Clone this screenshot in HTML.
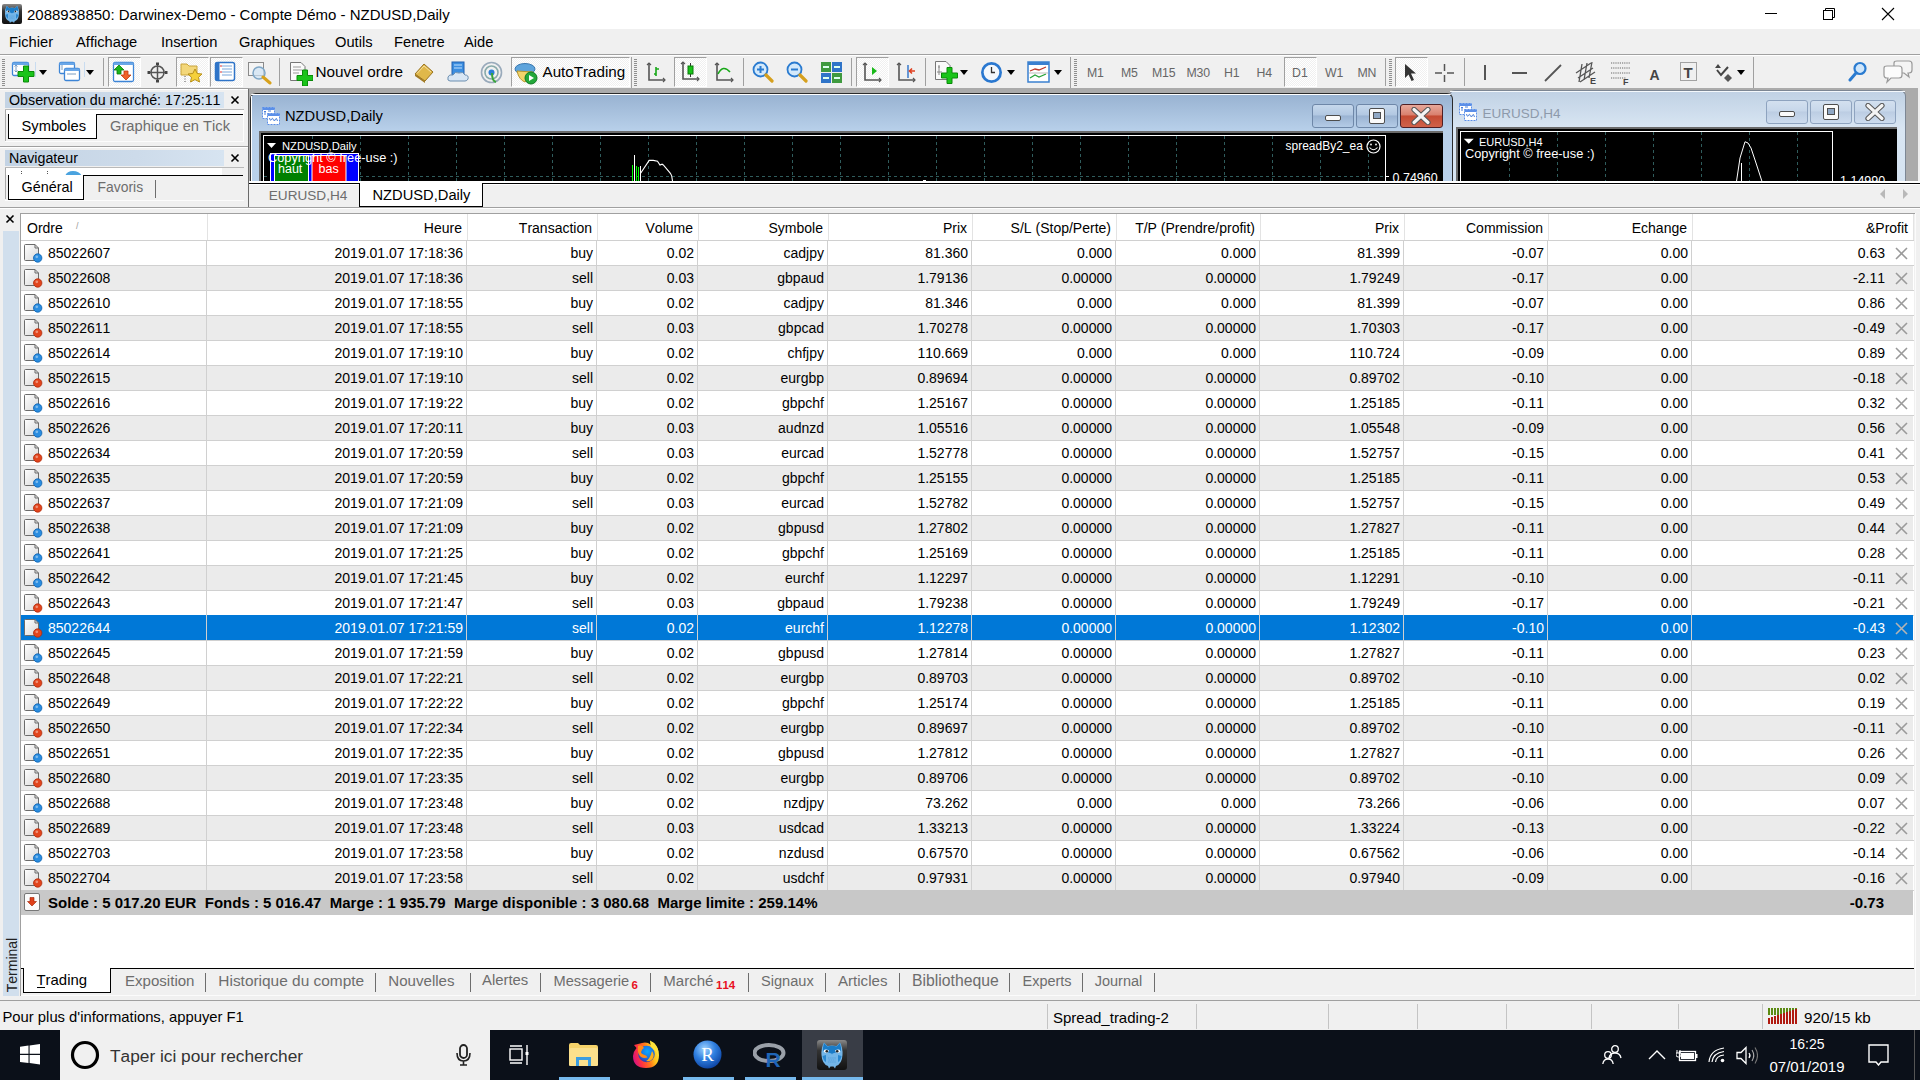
<!DOCTYPE html>
<html><head><meta charset="utf-8"><title>MT4</title>
<style>
html,body{margin:0;padding:0}
body{width:1920px;height:1080px;overflow:hidden;position:relative;font-family:"Liberation Sans",sans-serif;font-size:14px;color:#000;background:#f0f0f0}
.a{position:absolute}
.t{position:absolute;white-space:nowrap;line-height:1;font-variant-ligatures:none;font-kerning:none}
</style></head><body>
<div class="a" style="left:0px;top:0px;width:1920px;height:29px;background:#fff;"></div>
<svg class="a" style="left:2px;top:4px" width="20" height="20" viewBox="0 0 30 30"><defs><linearGradient id="OBG1" x1="0" y1="0" x2="0" y2="1"><stop offset="0" stop-color="#8a8a8a"/><stop offset="0.35" stop-color="#333"/><stop offset="1" stop-color="#111"/></linearGradient></defs>
<rect x="0" y="0" width="30" height="30" rx="3" fill="url(#OBG1)"/>
<path d="M7 2.5L10.5 6Q15 4.8 19.5 6L23 2.5Q26 8 25.5 15Q25 24 19 26L18 28.5L16.5 26.5H13.5L12 28.5L11 26Q5 24 4.5 15Q4 8 7 2.5Z" fill="#74b6e8"/>
<path d="M7 3L10.5 6.5Q15 5 19.5 6.5L23 3Q24.5 8 24 11L15.5 13.5L15 14.5L14.5 13.5L6 11Q5.5 8 7 3Z" fill="#1a7cc8"/>
<path d="M6.5 11Q8 8.5 12 10.5Q11.5 13 9 12.8Q7 12.5 6.5 11Z" fill="#fff"/><path d="M23.5 11Q22 8.5 18 10.5Q18.5 13 21 12.8Q23 12.5 23.5 11Z" fill="#fff"/>
<circle cx="9.8" cy="11.2" r="1.3" fill="#222"/><circle cx="20.2" cy="11.2" r="1.3" fill="#222"/>
<path d="M5.5 16Q6.5 21 9 22V15Z M24.5 16Q23.5 21 21 22V15Z" fill="#2a88d0"/>
<path d="M11 18H19M11.5 20H18.5M11 22H19" stroke="#4a9ad8" stroke-width="0.7" stroke-dasharray="1.5 0.6"/></svg>
<div class="t" style="top:7.30px;font-size:15px;left:27px;">2088938850: Darwinex-Demo - Compte Démo - NZDUSD,Daily</div>
<div class="a" style="left:1765px;top:13px;width:12px;height:1px;background:#000;"></div>
<svg class="a" style="left:1821px;top:6px;" width="16" height="16" viewBox="0 0 16 16"><rect x="2.5" y="4.5" width="9" height="9" fill="none" stroke="#000"/><path d="M4.5 4.5V2.5H13.5V11.5H11.5" fill="none" stroke="#000"/></svg>
<svg class="a" style="left:1880px;top:6px;" width="16" height="16" viewBox="0 0 16 16"><path d="M2 2L14 14M14 2L2 14" stroke="#000" stroke-width="1.1"/></svg>
<div class="a" style="left:0px;top:29px;width:1920px;height:25px;background:#f0f0f0;"></div>
<div class="t" style="top:34.56px;font-size:14.7px;left:9px;">Fichier</div>
<div class="t" style="top:34.56px;font-size:14.7px;left:76px;">Affichage</div>
<div class="t" style="top:34.56px;font-size:14.7px;left:161px;">Insertion</div>
<div class="t" style="top:34.56px;font-size:14.7px;left:239px;">Graphiques</div>
<div class="t" style="top:34.56px;font-size:14.7px;left:335px;">Outils</div>
<div class="t" style="top:34.56px;font-size:14.7px;left:394px;">Fenetre</div>
<div class="t" style="top:34.56px;font-size:14.7px;left:464px;">Aide</div>
<div class="a" style="left:0px;top:54px;width:1920px;height:1px;background:#dadada;"></div>
<div class="a" style="left:0px;top:55px;width:1920px;height:33px;background:#f0f0f0;"></div>
<div class="a" style="left:0px;top:54px;width:1920px;height:1px;background:#a0a0a0;"></div>
<div class="a" style="left:0px;top:55px;width:1920px;height:1px;background:#fff;"></div>
<div class="a" style="left:0px;top:88px;width:1920px;height:1px;background:#a0a0a0;"></div>
<div class="a" style="left:0px;top:89px;width:248px;height:1px;background:#fff;"></div>
<svg class="a" style="left:2px;top:59px;" width="3" height="28" viewBox="0 0 3 28"><rect x="0" y="0" width="3" height="1" fill="#8f8f8f"/><rect x="0" y="2" width="3" height="1" fill="#8f8f8f"/><rect x="0" y="4" width="3" height="1" fill="#8f8f8f"/><rect x="0" y="6" width="3" height="1" fill="#8f8f8f"/><rect x="0" y="8" width="3" height="1" fill="#8f8f8f"/><rect x="0" y="10" width="3" height="1" fill="#8f8f8f"/><rect x="0" y="12" width="3" height="1" fill="#8f8f8f"/><rect x="0" y="14" width="3" height="1" fill="#8f8f8f"/><rect x="0" y="16" width="3" height="1" fill="#8f8f8f"/><rect x="0" y="18" width="3" height="1" fill="#8f8f8f"/><rect x="0" y="20" width="3" height="1" fill="#8f8f8f"/><rect x="0" y="22" width="3" height="1" fill="#8f8f8f"/><rect x="0" y="24" width="3" height="1" fill="#8f8f8f"/><rect x="0" y="26" width="3" height="1" fill="#8f8f8f"/></svg>
<svg class="a" style="left:11px;top:61px;" width="24" height="22" viewBox="0 0 24 22"><rect x="1.5" y="1.5" width="16" height="13" rx="1.5" fill="#fff" stroke="#3d85d6" stroke-width="1.3"/><rect x="1.5" y="1.5" width="16" height="2.5" fill="#6aa7e8"/><path d="M5 4V11M3.5 5.5L5 4L6.5 5.5M3.5 9.5L5 11L6.5 9.5" stroke="#7a9cc0" fill="none"/><path d="M12.5 5h5v5.5h5.5v5h-5.5v5.5h-5v-5.5h-5.5v-5h5.5z" fill="#19c419" stroke="#0a8a0a" stroke-width="1"/></svg>
<div class="a" style="left:35px;top:62px;width:1px;height:15px;background:#c9dcf0;"></div>
<svg class="a" style="left:39px;top:70px;" width="8" height="5" viewBox="0 0 8 5"><path d="M0 0H8L4 5Z" fill="#000"/></svg>
<svg class="a" style="left:58px;top:61px;" width="24" height="22" viewBox="0 0 24 22"><rect x="1.5" y="1.5" width="15" height="11" rx="1.5" fill="#fff" stroke="#3d85d6" stroke-width="1.3"/><rect x="1.5" y="1.5" width="15" height="2.5" fill="#6aa7e8"/><rect x="6.5" y="7.5" width="15" height="12" rx="1.5" fill="#fff" stroke="#3d85d6" stroke-width="1.3"/><rect x="6.5" y="7.5" width="15" height="2.5" fill="#6aa7e8"/><path d="M4 4V9M9 13H18" stroke="#7a9cc0" fill="none"/></svg>
<div class="a" style="left:84px;top:62px;width:1px;height:15px;background:#c9dcf0;"></div>
<svg class="a" style="left:86px;top:70px;" width="8" height="5" viewBox="0 0 8 5"><path d="M0 0H8L4 5Z" fill="#000"/></svg>
<div class="a" style="left:103px;top:58px;width:1px;height:28px;background:#a0a0a0;"></div>
<div class="a" style="left:108px;top:57px;width:31px;height:28px;border-left:1px solid #a0a0a0;border-top:1px solid #a0a0a0;border-right:1px solid #fff;border-bottom:1px solid #fff;background-color:#f0f0f0;background-image:linear-gradient(45deg,#fff 25%,transparent 25%,transparent 75%,#fff 75%),linear-gradient(45deg,#fff 25%,transparent 25%,transparent 75%,#fff 75%);background-size:2px 2px;background-position:0 0,1px 1px"></div>
<svg class="a" style="left:112px;top:61px;" width="23" height="22" viewBox="0 0 23 22"><rect x="1.5" y="1.5" width="20" height="19" rx="1.5" fill="#fff" stroke="#3d85d6" stroke-width="1.3"/><rect x="1.5" y="1.5" width="20" height="2.5" fill="#6aa7e8"/><path d="M7 4L12 9H9V13H5V9H2Z" fill="#1bb51b" stroke="#0a7a0a" stroke-width="0.8"/><path d="M14 19L19 14H16V10H12V14H9Z" fill="#f0622a" stroke="#c03a10" stroke-width="0.8"/></svg>
<svg class="a" style="left:147px;top:62px;" width="21" height="21" viewBox="0 0 21 21"><circle cx="10.5" cy="10.5" r="6.5" fill="none" stroke="#555" stroke-width="1.5"/><path d="M10.5 1V20M1 10.5H20" stroke="#555" stroke-width="1.5"/><path d="M10.5 0.5V3M10.5 18V20.5M0.5 10.5H3M18 10.5H20.5" stroke="#444" stroke-width="3"/></svg>
<div class="a" style="left:176px;top:57px;width:31px;height:28px;border-left:1px solid #a0a0a0;border-top:1px solid #a0a0a0;border-right:1px solid #fff;border-bottom:1px solid #fff;background-color:#f0f0f0;background-image:linear-gradient(45deg,#fff 25%,transparent 25%,transparent 75%,#fff 75%),linear-gradient(45deg,#fff 25%,transparent 25%,transparent 75%,#fff 75%);background-size:2px 2px;background-position:0 0,1px 1px"></div>
<svg class="a" style="left:180px;top:60px;" width="25" height="25" viewBox="0 0 25 25"><path d="M1 4H7L9 6H17V15H1Z" fill="#f3d77a" stroke="#c9a43c"/><path d="M15 9L17.2 13.5L22 14L18.5 17.3L19.5 22L15 19.6L10.5 22L11.5 17.3L8 14L12.8 13.5Z" fill="#f5d03a" stroke="#b8901a"/><path d="M5 16V23" stroke="#555" stroke-dasharray="1 1.5"/></svg>
<div class="a" style="left:210px;top:57px;width:31px;height:28px;border-left:1px solid #a0a0a0;border-top:1px solid #a0a0a0;border-right:1px solid #fff;border-bottom:1px solid #fff;background-color:#f0f0f0;background-image:linear-gradient(45deg,#fff 25%,transparent 25%,transparent 75%,#fff 75%),linear-gradient(45deg,#fff 25%,transparent 25%,transparent 75%,#fff 75%);background-size:2px 2px;background-position:0 0,1px 1px"></div>
<svg class="a" style="left:214px;top:61px;" width="23" height="22" viewBox="0 0 23 22"><rect x="1.5" y="1.5" width="19" height="18" rx="2" fill="#fff" stroke="#2f74c8" stroke-width="1.5"/><rect x="1.5" y="1.5" width="4" height="18" fill="#2f74c8"/><path d="M8 5H18M8 8H18M8 11H18M8 14H18" stroke="#7aa7da"/><path d="M6 5H8M6 11H8" stroke="#e03030"/></svg>
<svg class="a" style="left:247px;top:61px;" width="27" height="24" viewBox="0 0 27 24"><rect x="1.5" y="1.5" width="15" height="13" fill="#f4f4f4" stroke="#8a8a8a"/><circle cx="12" cy="12" r="6" fill="#cfe3f3" fill-opacity="0.7" stroke="#7ea6c6" stroke-width="1.5"/><path d="M16 16L23 22" stroke="#d8a21c" stroke-width="3" stroke-linecap="round"/></svg>
<div class="a" style="left:279px;top:58px;width:1px;height:28px;background:#a0a0a0;"></div>
<svg class="a" style="left:289px;top:61px;" width="24" height="25" viewBox="0 0 24 25"><path d="M1.5 1.5H12L16 5.5V19.5H1.5Z" fill="#fafafa" stroke="#777"/><path d="M4 6H12M4 9H13M4 12H10" stroke="#999"/><path d="M13.5 9h5v5.5h5.5v5h-5.5v5.5h-5v-5.5h-5.5v-5h5.5z" fill="#19c419" stroke="#0a8a0a" stroke-width="1"/></svg>
<div class="t" style="top:64.05px;font-size:15.3px;left:315.5px;">Nouvel ordre</div>
<svg class="a" style="left:413px;top:62px;" width="22" height="21" viewBox="0 0 22 21"><path d="M2 12L11 2L20 10L12 19Z" fill="#e0b84a" stroke="#9a7420"/><path d="M2 12L12 19L12 21L2 14Z" fill="#a27a22"/><path d="M4 11.5L11 4L18 10" fill="none" stroke="#f6e0a0"/></svg>
<svg class="a" style="left:447px;top:61px;" width="22" height="22" viewBox="0 0 22 22"><rect x="5" y="1" width="12" height="13" fill="#3c8ee0" stroke="#2160b0"/><path d="M7 4H15M7 7H15" stroke="#bfe0ff"/><path d="M3 20Q0 20 1 16Q2 13 6 14Q8 10 12 12Q16 10 18 14Q22 14 21 18Q20 20 18 20Z" fill="#d8e6f4" stroke="#6d8fb0"/></svg>
<svg class="a" style="left:480px;top:61px;" width="23" height="23" viewBox="0 0 23 23"><circle cx="11.5" cy="11.5" r="10" fill="none" stroke="#9ab" stroke-width="1.6"/><circle cx="11.5" cy="11.5" r="6.5" fill="none" stroke="#8aa" stroke-width="1.6"/><circle cx="11.5" cy="11.5" r="3" fill="#2b7fd6"/><path d="M12 12Q12 20 16 21" stroke="#3aa53a" stroke-width="2" fill="none"/></svg>
<div class="a" style="left:511px;top:57px;width:117px;height:28px;border-left:1px solid #a0a0a0;border-top:1px solid #a0a0a0;border-right:1px solid #fff;border-bottom:1px solid #fff;background-color:#f0f0f0;background-image:linear-gradient(45deg,#fff 25%,transparent 25%,transparent 75%,#fff 75%),linear-gradient(45deg,#fff 25%,transparent 25%,transparent 75%,#fff 75%);background-size:2px 2px;background-position:0 0,1px 1px"></div>
<svg class="a" style="left:514px;top:60px;" width="25" height="26" viewBox="0 0 25 26"><ellipse cx="11" cy="9" rx="10" ry="5.5" fill="#5ea4dc" stroke="#3a78b0"/><path d="M3 11Q5 20 11 22Q16 20 19 12Z" fill="#f2d36a" stroke="#b8962c"/><circle cx="17" cy="18" r="6" fill="#22a83a" stroke="#0f7a22"/><path d="M15 15V21L20 18Z" fill="#fff"/></svg>
<div class="t" style="top:64.13px;font-size:15.2px;left:542.5px;">AutoTrading</div>
<div class="a" style="left:631px;top:57px;width:1px;height:31px;background:#a0a0a0;"></div>
<svg class="a" style="left:634px;top:59px;" width="3" height="28" viewBox="0 0 3 28"><rect x="0" y="0" width="3" height="1" fill="#8f8f8f"/><rect x="0" y="2" width="3" height="1" fill="#8f8f8f"/><rect x="0" y="4" width="3" height="1" fill="#8f8f8f"/><rect x="0" y="6" width="3" height="1" fill="#8f8f8f"/><rect x="0" y="8" width="3" height="1" fill="#8f8f8f"/><rect x="0" y="10" width="3" height="1" fill="#8f8f8f"/><rect x="0" y="12" width="3" height="1" fill="#8f8f8f"/><rect x="0" y="14" width="3" height="1" fill="#8f8f8f"/><rect x="0" y="16" width="3" height="1" fill="#8f8f8f"/><rect x="0" y="18" width="3" height="1" fill="#8f8f8f"/><rect x="0" y="20" width="3" height="1" fill="#8f8f8f"/><rect x="0" y="22" width="3" height="1" fill="#8f8f8f"/><rect x="0" y="24" width="3" height="1" fill="#8f8f8f"/><rect x="0" y="26" width="3" height="1" fill="#8f8f8f"/></svg>
<svg class="a" style="left:646px;top:62px;" width="22" height="22" viewBox="0 0 22 22"><path d="M3 1V18H19" fill="none" stroke="#555" stroke-width="1.6"/><path d="M1 3L3 1L5 3M17 16L19 18L17 20" fill="none" stroke="#555" stroke-width="1.2"/><path d="M10 5V14M8 12H10M10 7H13" stroke="#18a818" stroke-width="1.6" fill="none"/></svg>
<div class="a" style="left:674px;top:57px;width:31px;height:28px;border-left:1px solid #a0a0a0;border-top:1px solid #a0a0a0;border-right:1px solid #fff;border-bottom:1px solid #fff;background-color:#f0f0f0;background-image:linear-gradient(45deg,#fff 25%,transparent 25%,transparent 75%,#fff 75%),linear-gradient(45deg,#fff 25%,transparent 25%,transparent 75%,#fff 75%);background-size:2px 2px;background-position:0 0,1px 1px"></div>
<svg class="a" style="left:680px;top:61px;" width="22" height="22" viewBox="0 0 22 22"><path d="M3 1V18H19" fill="none" stroke="#555" stroke-width="1.6"/><path d="M1 3L3 1L5 3M17 16L19 18L17 20" fill="none" stroke="#555" stroke-width="1.2"/><path d="M10.5 2V16" stroke="#333" stroke-width="1"/><rect x="8" y="5" width="5" height="8" fill="#18c418" stroke="#0a7a0a"/></svg>
<svg class="a" style="left:714px;top:62px;" width="22" height="22" viewBox="0 0 22 22"><path d="M3 1V18H19" fill="none" stroke="#555" stroke-width="1.6"/><path d="M1 3L3 1L5 3M17 16L19 18L17 20" fill="none" stroke="#555" stroke-width="1.2"/><path d="M4 12Q9 2 16 10" stroke="#18a818" stroke-width="1.6" fill="none"/></svg>
<div class="a" style="left:743px;top:58px;width:1px;height:28px;background:#a0a0a0;"></div>
<svg class="a" style="left:752px;top:61px;" width="22" height="22" viewBox="0 0 22 22"><circle cx="8.5" cy="8.5" r="7" fill="#d3e9fb" stroke="#2a7bd0" stroke-width="1.8"/><path d="M14 14L20 20" stroke="#d6a01e" stroke-width="3.2" stroke-linecap="round"/><path d="M5 8.5H12M8.5 5V12" stroke="#2a7bd0" stroke-width="2"/></svg>
<svg class="a" style="left:786px;top:61px;" width="22" height="22" viewBox="0 0 22 22"><circle cx="8.5" cy="8.5" r="7" fill="#d3e9fb" stroke="#2a7bd0" stroke-width="1.8"/><path d="M14 14L20 20" stroke="#d6a01e" stroke-width="3.2" stroke-linecap="round"/><path d="M5 8.5H12" stroke="#2a7bd0" stroke-width="2"/></svg>
<svg class="a" style="left:820px;top:61px;" width="23" height="22" viewBox="0 0 23 22"><rect x="1" y="1" width="10" height="10" fill="#3f9a3f"/><rect x="12" y="1" width="10" height="10" fill="#2f74c8"/><rect x="1" y="12" width="10" height="10" fill="#2f74c8"/><rect x="12" y="12" width="10" height="10" fill="#3f9a3f"/><path d="M3 6H9M14 6H20M3 17H9M14 17H20" stroke="#dfe" stroke-width="2"/></svg>
<div class="a" style="left:851px;top:58px;width:1px;height:28px;background:#a0a0a0;"></div>
<div class="a" style="left:856px;top:57px;width:31px;height:28px;border-left:1px solid #a0a0a0;border-top:1px solid #a0a0a0;border-right:1px solid #fff;border-bottom:1px solid #fff;background-color:#f0f0f0;background-image:linear-gradient(45deg,#fff 25%,transparent 25%,transparent 75%,#fff 75%),linear-gradient(45deg,#fff 25%,transparent 25%,transparent 75%,#fff 75%);background-size:2px 2px;background-position:0 0,1px 1px"></div>
<svg class="a" style="left:862px;top:62px;" width="22" height="22" viewBox="0 0 22 22"><path d="M3 1V18H19" fill="none" stroke="#555" stroke-width="1.6"/><path d="M1 3L3 1L5 3M17 16L19 18L17 20" fill="none" stroke="#555" stroke-width="1.2"/><path d="M10 5V13L15 9Z" fill="#18b818"/></svg>
<svg class="a" style="left:896px;top:62px;" width="22" height="22" viewBox="0 0 22 22"><path d="M3 1V18H19" fill="none" stroke="#555" stroke-width="1.6"/><path d="M1 3L3 1L5 3M17 16L19 18L17 20" fill="none" stroke="#555" stroke-width="1.2"/><path d="M12 3V16" stroke="#2a70c8" stroke-width="1.4"/><path d="M19 9H14M16 6.5L13.5 9L16 11.5" stroke="#e04020" stroke-width="1.6" fill="none"/></svg>
<div class="a" style="left:925px;top:58px;width:1px;height:28px;background:#a0a0a0;"></div>
<svg class="a" style="left:934px;top:60px;" width="25" height="26" viewBox="0 0 25 26"><path d="M1.5 1.5H12L16 5.5V19.5H1.5Z" fill="#fafafa" stroke="#777"/><path d="M5 5V15M4 7H6M3 12H8" stroke="#888"/><path d="M13.0 7.5h5v5.5h5.5v5h-5.5v5.5h-5v-5.5h-5.5v-5h5.5z" fill="#19c419" stroke="#0a8a0a" stroke-width="1"/></svg>
<svg class="a" style="left:960px;top:70px;" width="8" height="5" viewBox="0 0 8 5"><path d="M0 0H8L4 5Z" fill="#000"/></svg>
<svg class="a" style="left:980px;top:61px;" width="23" height="23" viewBox="0 0 23 23"><circle cx="11.5" cy="11.5" r="10.5" fill="#2a78d0"/><circle cx="11.5" cy="11.5" r="7.8" fill="#f4f8fc"/><path d="M11.5 6V11.5H15" stroke="#333" stroke-width="1.3" fill="none"/></svg>
<svg class="a" style="left:1007px;top:70px;" width="8" height="5" viewBox="0 0 8 5"><path d="M0 0H8L4 5Z" fill="#000"/></svg>
<svg class="a" style="left:1027px;top:61px;" width="23" height="22" viewBox="0 0 23 22"><rect x="1" y="1" width="21" height="20" fill="#fff" stroke="#3a80d0" stroke-width="1.5"/><rect x="1" y="1" width="21" height="3" fill="#3a80d0"/><path d="M3 10L8 8L12 9L19 6" stroke="#c0392b" stroke-width="1.3" fill="none"/><path d="M3 17L8 14L12 16L19 13" stroke="#27a33a" stroke-width="1.3" fill="none"/><path d="M2 12H21" stroke="#bbb"/></svg>
<svg class="a" style="left:1054px;top:70px;" width="8" height="5" viewBox="0 0 8 5"><path d="M0 0H8L4 5Z" fill="#000"/></svg>
<div class="a" style="left:1070px;top:57px;width:1px;height:31px;background:#a0a0a0;"></div>
<svg class="a" style="left:1074px;top:59px;" width="3" height="28" viewBox="0 0 3 28"><rect x="0" y="0" width="3" height="1" fill="#8f8f8f"/><rect x="0" y="2" width="3" height="1" fill="#8f8f8f"/><rect x="0" y="4" width="3" height="1" fill="#8f8f8f"/><rect x="0" y="6" width="3" height="1" fill="#8f8f8f"/><rect x="0" y="8" width="3" height="1" fill="#8f8f8f"/><rect x="0" y="10" width="3" height="1" fill="#8f8f8f"/><rect x="0" y="12" width="3" height="1" fill="#8f8f8f"/><rect x="0" y="14" width="3" height="1" fill="#8f8f8f"/><rect x="0" y="16" width="3" height="1" fill="#8f8f8f"/><rect x="0" y="18" width="3" height="1" fill="#8f8f8f"/><rect x="0" y="20" width="3" height="1" fill="#8f8f8f"/><rect x="0" y="22" width="3" height="1" fill="#8f8f8f"/><rect x="0" y="24" width="3" height="1" fill="#8f8f8f"/><rect x="0" y="26" width="3" height="1" fill="#8f8f8f"/></svg>
<div class="t" style="top:66.59px;font-size:12.3px;left:1087px;color:#666;letter-spacing:-0.2px">M1</div>
<div class="t" style="top:66.59px;font-size:12.3px;left:1121px;color:#666;letter-spacing:-0.2px">M5</div>
<div class="t" style="top:66.59px;font-size:12.3px;left:1152px;color:#666;letter-spacing:-0.2px">M15</div>
<div class="t" style="top:66.59px;font-size:12.3px;left:1186.5px;color:#666;letter-spacing:-0.2px">M30</div>
<div class="t" style="top:66.59px;font-size:12.3px;left:1224px;color:#666;letter-spacing:-0.2px">H1</div>
<div class="t" style="top:66.59px;font-size:12.3px;left:1256.5px;color:#666;letter-spacing:-0.2px">H4</div>
<div class="t" style="top:66.59px;font-size:12.3px;left:1325px;color:#666;letter-spacing:-0.2px">W1</div>
<div class="t" style="top:66.59px;font-size:12.3px;left:1357.5px;color:#666;letter-spacing:-0.2px">MN</div>
<div class="a" style="left:1284px;top:57px;width:31px;height:28px;border-left:1px solid #a0a0a0;border-top:1px solid #a0a0a0;border-right:1px solid #fff;border-bottom:1px solid #fff;background-color:#f0f0f0;background-image:linear-gradient(45deg,#fff 25%,transparent 25%,transparent 75%,#fff 75%),linear-gradient(45deg,#fff 25%,transparent 25%,transparent 75%,#fff 75%);background-size:2px 2px;background-position:0 0,1px 1px"></div>
<div class="t" style="top:66.59px;font-size:12.3px;left:1292px;color:#666;">D1</div>
<div class="a" style="left:1385px;top:58px;width:1px;height:28px;background:#a0a0a0;"></div>
<svg class="a" style="left:1389px;top:59px;" width="3" height="28" viewBox="0 0 3 28"><rect x="0" y="0" width="3" height="1" fill="#8f8f8f"/><rect x="0" y="2" width="3" height="1" fill="#8f8f8f"/><rect x="0" y="4" width="3" height="1" fill="#8f8f8f"/><rect x="0" y="6" width="3" height="1" fill="#8f8f8f"/><rect x="0" y="8" width="3" height="1" fill="#8f8f8f"/><rect x="0" y="10" width="3" height="1" fill="#8f8f8f"/><rect x="0" y="12" width="3" height="1" fill="#8f8f8f"/><rect x="0" y="14" width="3" height="1" fill="#8f8f8f"/><rect x="0" y="16" width="3" height="1" fill="#8f8f8f"/><rect x="0" y="18" width="3" height="1" fill="#8f8f8f"/><rect x="0" y="20" width="3" height="1" fill="#8f8f8f"/><rect x="0" y="22" width="3" height="1" fill="#8f8f8f"/><rect x="0" y="24" width="3" height="1" fill="#8f8f8f"/><rect x="0" y="26" width="3" height="1" fill="#8f8f8f"/></svg>
<div class="a" style="left:1395px;top:57px;width:31px;height:28px;border-left:1px solid #a0a0a0;border-top:1px solid #a0a0a0;border-right:1px solid #fff;border-bottom:1px solid #fff;background-color:#f0f0f0;background-image:linear-gradient(45deg,#fff 25%,transparent 25%,transparent 75%,#fff 75%),linear-gradient(45deg,#fff 25%,transparent 25%,transparent 75%,#fff 75%);background-size:2px 2px;background-position:0 0,1px 1px"></div>
<svg class="a" style="left:1404px;top:63px;" width="12" height="19" viewBox="0 0 12 19"><path d="M1 1V15L4.5 11.5L7.5 18L10 17L7 10.5H12Z" fill="#333"/></svg>
<svg class="a" style="left:1434px;top:63px;" width="21" height="20" viewBox="0 0 21 20"><path d="M10.5 1V19M1 10H20" stroke="#555" stroke-width="1.5"/><rect x="8" y="8" width="5" height="4" fill="#f0f0f0"/></svg>
<div class="a" style="left:1464px;top:58px;width:1px;height:28px;background:#a0a0a0;"></div>
<div class="a" style="left:1484px;top:65px;width:2px;height:15px;background:#555;"></div>
<div class="a" style="left:1512px;top:72px;width:15px;height:2px;background:#555;"></div>
<svg class="a" style="left:1544px;top:64px;" width="18" height="18" viewBox="0 0 18 18"><path d="M1 17L17 1" stroke="#555" stroke-width="1.8"/></svg>
<svg class="a" style="left:1575px;top:61px;" width="23" height="24" viewBox="0 0 23 24"><path d="M1 12L16 2M3 17L18 7M5 21L20 11M7 3L4 21M12 2L9 19M17 1L14 17" stroke="#555" stroke-width="1.3"/><text x="15" y="23" font-family="Liberation Sans" font-weight="bold" font-size="9" fill="#444">E</text></svg>
<svg class="a" style="left:1610px;top:61px;" width="22" height="24" viewBox="0 0 22 24"><path d="M1 2H20M1 7H20M1 12H20M1 17H16" stroke="#666" stroke-dasharray="1.2 1"/><text x="13" y="24" font-family="Liberation Sans" font-weight="bold" font-size="9" fill="#444">F</text></svg>
<div class="t" style="top:68.15px;font-size:14px;left:1649.5px;color:#444;font-weight:bold;">A</div>
<svg class="a" style="left:1680px;top:62px;" width="18" height="20" viewBox="0 0 18 20"><rect x="0.5" y="0.5" width="16" height="18" fill="none" stroke="#555" stroke-dasharray="1 1"/><text x="3.5" y="16" font-family="Liberation Sans" font-weight="bold" font-size="15" fill="#444">T</text></svg>
<svg class="a" style="left:1713px;top:62px;" width="21" height="22" viewBox="0 0 21 22"><path d="M2 6L5 2L8 6Z" fill="#444"/><path d="M4 8L8 13L15 5" stroke="#444" stroke-width="2" fill="none"/><path d="M11 16L15 20L19 16L15 12Z" fill="#555"/></svg>
<svg class="a" style="left:1737px;top:70px;" width="8" height="5" viewBox="0 0 8 5"><path d="M0 0H8L4 5Z" fill="#000"/></svg>
<div class="a" style="left:1753px;top:57px;width:1px;height:31px;background:#a0a0a0;"></div>
<svg class="a" style="left:1848px;top:61px;" width="20" height="22" viewBox="0 0 20 22"><circle cx="12" cy="7.5" r="5.5" fill="#cfe6fb" stroke="#2a7bd0" stroke-width="2.2"/><path d="M8 12L2 19" stroke="#2a7bd0" stroke-width="3" stroke-linecap="round"/></svg>
<svg class="a" style="left:1883px;top:60px;" width="30" height="24" viewBox="0 0 30 24"><path d="M11 3Q11 1 14 1H26Q29 1 29 4V10Q29 13 26 13H25L26 17L21 13H14Q11 13 11 10Z" fill="#f4f4f4" stroke="#999" stroke-width="1.2"/><path d="M1 8Q1 6 4 6H16Q19 6 19 9V15Q19 18 16 18H8L4 22L5 18H4Q1 18 1 15Z" fill="#fbfbfb" stroke="#999" stroke-width="1.2"/></svg>
<div class="a" style="left:0px;top:90px;width:248px;height:117px;background:#f0f0f0;"></div>
<div class="a" style="left:5px;top:92px;width:219px;height:16px;background:linear-gradient(90deg,#c3d3e4,#cddbea 60%,#d7e4f1)"></div>
<div class="t" style="top:92.94px;font-size:14.25px;left:9px;">Observation du marché: 17:25:11</div>
<svg class="a" style="left:230px;top:95px;" width="10" height="10" viewBox="0 0 10 10"><path d="M1.5 1.5L8.5 8.5M8.5 1.5L1.5 8.5" stroke="#000" stroke-width="1.6"/></svg>
<div class="a" style="left:5px;top:109px;width:239px;height:1px;background:#b9b9b9;"></div>
<div class="a" style="left:5px;top:110px;width:1px;height:31px;background:#a8a8a8;"></div>
<div class="a" style="left:6px;top:110px;width:237px;height:4px;background:#fff;"></div>
<div class="a" style="left:243px;top:110px;width:1px;height:31px;background:#fdfdfd;"></div>
<div class="a" style="left:96px;top:114px;width:147px;height:1px;background:#000;"></div>
<div class="a" style="left:8px;top:114px;width:89px;height:25px;background:#fff;"></div>
<div class="a" style="left:8px;top:114px;width:1px;height:25px;background:#000;"></div>
<div class="a" style="left:96px;top:114px;width:1px;height:25px;background:#000;"></div>
<div class="a" style="left:8px;top:138px;width:89px;height:1px;background:#000;"></div>
<div class="a" style="left:5px;top:141px;width:239px;height:1px;background:#fcfcfc;"></div>
<div class="t" style="top:119.06px;font-size:14.7px;left:21.5px;">Symboles</div>
<div class="t" style="top:119.06px;font-size:14.7px;left:110px;color:#6d6d6d;">Graphique en Tick</div>
<div class="a" style="left:0px;top:146px;width:248px;height:1px;background:#a0a0a0;"></div>
<div class="a" style="left:0px;top:147px;width:248px;height:1px;background:#fff;"></div>
<div class="a" style="left:5px;top:150px;width:219px;height:16px;background:linear-gradient(90deg,#c3d3e4,#cddbea 60%,#d7e4f1)"></div>
<div class="t" style="top:150.94px;font-size:14.25px;left:9px;">Navigateur</div>
<svg class="a" style="left:230px;top:153px;" width="10" height="10" viewBox="0 0 10 10"><path d="M1.5 1.5L8.5 8.5M8.5 1.5L1.5 8.5" stroke="#000" stroke-width="1.6"/></svg>
<div class="a" style="left:5px;top:167px;width:239px;height:1px;background:#b9b9b9;"></div>
<div class="a" style="left:5px;top:168px;width:1px;height:31px;background:#a8a8a8;"></div>
<div class="a" style="left:6px;top:168px;width:237px;height:7px;background:#fff;"></div>
<div class="a" style="left:222px;top:168px;width:21px;height:7px;background:#f0f0f0;"></div>
<div class="a" style="left:21px;top:171px;width:1px;height:1px;background:#555;"></div>
<div class="a" style="left:21px;top:173px;width:1px;height:1px;background:#555;"></div>
<div class="a" style="left:21px;top:175px;width:1px;height:1px;background:#555;"></div>
<div class="a" style="left:47px;top:171px;width:1px;height:1px;background:#555;"></div>
<div class="a" style="left:47px;top:173px;width:1px;height:1px;background:#555;"></div>
<div class="a" style="left:47px;top:175px;width:1px;height:1px;background:#555;"></div>
<svg class="a" style="left:64px;top:170px;" width="20" height="6" viewBox="0 0 20 6"><path d="M1 6Q3 1 9 1Q15 1 18 6Z" fill="#4aa3df"/></svg>
<div class="a" style="left:83px;top:175px;width:160px;height:1px;background:#000;"></div>
<div class="a" style="left:8px;top:175px;width:76px;height:25px;background:#fff;"></div>
<div class="a" style="left:8px;top:175px;width:1px;height:25px;background:#000;"></div>
<div class="a" style="left:83px;top:175px;width:1px;height:25px;background:#000;"></div>
<div class="a" style="left:8px;top:199px;width:76px;height:1px;background:#000;"></div>
<div class="a" style="left:5px;top:200px;width:239px;height:1px;background:#fcfcfc;"></div>
<div class="t" style="top:180.31px;font-size:14.4px;left:21.5px;">Général</div>
<div class="t" style="top:180.73px;font-size:13.9px;left:97.6px;color:#6d6d6d;">Favoris</div>
<div class="a" style="left:155px;top:180px;width:1px;height:18px;background:#6d6d6d;"></div>
<div class="a" style="left:248px;top:89px;width:1px;height:118px;background:#6a6a6a;"></div>
<div class="a" style="left:249px;top:88px;width:1671px;height:95px;background:#ababab;"></div>
<div class="a" style="left:1918px;top:88px;width:2px;height:95px;background:#f0f0f0;"></div>
<div class="a" style="left:1449px;top:90px;width:455px;height:100px;border:1px solid #7d8794;border-bottom:none;border-radius:6px 6px 0 0;background:linear-gradient(#c0d1e4,#d9e6f3 38px,#d5e3f1)"></div>
<div class="a" style="left:1450px;top:91px;width:455px;height:1px;background:#f4f8fc"></div>
<svg class="a" style="left:1459px;top:103px;" width="19" height="19" viewBox="0 0 19 19"><rect x="0.5" y="0.5" width="12" height="11" fill="#fff" stroke="#5b8fe8" stroke-dasharray="2 1"/>
<rect x="0.5" y="0.5" width="12" height="2.5" fill="#5b8fe8"/>
<path d="M3 8V4M2 5L3 4L4 5M6 4H9" stroke="#4a7fd8" fill="none"/>
<rect x="5.5" y="6.5" width="12" height="11" fill="#fff" stroke="#5b8fe8" stroke-dasharray="2 1"/>
<rect x="5.5" y="6.5" width="12" height="2.5" fill="#5b8fe8"/>
<path d="M7.5 11Q8.5 15 9.5 12Q10.5 10 11.5 13Q12.5 15.5 13.5 12Q14.5 10 15.5 14" stroke="#4a7fd8" fill="none"/></svg>
<div class="t" style="top:106.57px;font-size:13.5px;left:1482.5px;color:#8d9aab;">EURUSD,H4</div>
<div class="a" style="left:1766px;top:100px;width:40px;height:22px;border:1px solid #8ea3bf;border-radius:3px;background:linear-gradient(#d3e0ef 0%,#c7d7ea 45%,#bccde3 50%,#cddcee 100%)"></div>
<svg class="a" style="left:1778px;top:106px;" width="18" height="12" viewBox="0 0 18 12"><rect x="1.5" y="5.5" width="15" height="5" rx="1.5" fill="#fafafa" stroke="#4d4d4d" stroke-width="1"/></svg>
<div class="a" style="left:1810px;top:100px;width:40px;height:22px;border:1px solid #8ea3bf;border-radius:3px;background:linear-gradient(#d3e0ef 0%,#c7d7ea 45%,#bccde3 50%,#cddcee 100%)"></div>
<svg class="a" style="left:1822px;top:103px;" width="18" height="18" viewBox="0 0 18 18"><rect x="1.5" y="1.5" width="15" height="15" rx="1.5" fill="#fafafa" stroke="#4d4d4d"/><rect x="5.5" y="5.5" width="7" height="6" fill="#8fa7c4" stroke="#4d4d4d"/></svg>
<div class="a" style="left:1854px;top:100px;width:40px;height:22px;border:1px solid #8ea3bf;border-radius:3px;background:linear-gradient(#d3e0ef 0%,#c7d7ea 45%,#bccde3 50%,#cddcee 100%)"></div>
<svg class="a" style="left:1865px;top:103px;" width="20" height="18" viewBox="0 0 20 18"><path d="M3 2.5L10 9L17 2.5M3 15.5L10 9L17 15.5" stroke="#555" stroke-width="5.2" stroke-linecap="round" fill="none"/><path d="M3 2.5L10 9L17 2.5M3 15.5L10 9L17 15.5" stroke="#f4f4f4" stroke-width="3.2" stroke-linecap="round" fill="none"/></svg>
<div class="a" style="left:1456px;top:127px;width:441px;height:56px;background:#000;box-shadow:inset 2px 2px 0 #6a6a6a"></div>
<svg class="a" style="left:1455px;top:126px;" width="442" height="57" viewBox="0 0 442 57"><rect x="5.5" y="5.5" width="372" height="80" fill="none" stroke="#fff"/><line x1="54.5" y1="6" x2="54.5" y2="57" stroke="#2f5c5c" stroke-width="1" stroke-dasharray="3 3"/><line x1="102.5" y1="6" x2="102.5" y2="57" stroke="#2f5c5c" stroke-width="1" stroke-dasharray="3 3"/><line x1="150.5" y1="6" x2="150.5" y2="57" stroke="#2f5c5c" stroke-width="1" stroke-dasharray="3 3"/><line x1="198.5" y1="6" x2="198.5" y2="57" stroke="#2f5c5c" stroke-width="1" stroke-dasharray="3 3"/><line x1="246.5" y1="6" x2="246.5" y2="57" stroke="#2f5c5c" stroke-width="1" stroke-dasharray="3 3"/><line x1="294.5" y1="6" x2="294.5" y2="57" stroke="#2f5c5c" stroke-width="1" stroke-dasharray="3 3"/><line x1="342.5" y1="6" x2="342.5" y2="57" stroke="#2f5c5c" stroke-width="1" stroke-dasharray="3 3"/><path d="M3 57L287 57" stroke="#fff"/><polyline points="281.25,57 285,32 290,15.75 293,17 296,22 301,37 307.5,57" fill="none" stroke="#fff" stroke-width="1"/><line x1="286.5" y1="37" x2="286.5" y2="57" stroke="#fff"/><path d="M8.75 12.75H18.75L13.75 17.75Z" fill="#fff"/></svg>
<div class="t" style="top:136.99px;font-size:11px;left:1479px;color:#fff;">EURUSD,H4</div>
<div class="t" style="top:147.91px;font-size:12.8px;left:1465px;color:#fff;">Copyright © free-use :)</div>
<div class="t" style="top:175.42px;font-size:12.5px;left:1840px;color:#fff;">1.14990</div>
<div class="a" style="left:1906px;top:88px;width:12px;height:95px;background:#ababab;"></div>
<div class="a" style="left:250px;top:93px;width:1201px;height:100px;border:1px solid #2b2b2b;border-bottom:none;border-radius:6px 6px 0 0;background:linear-gradient(#98b2d1,#b8d0ea 37px,#b9d1ea)"></div>
<div class="a" style="left:251px;top:94px;width:1200px;height:1px;background:#fff;border-radius:5px 5px 0 0"></div>
<div class="a" style="left:251px;top:96px;width:1px;height:90px;background:#fff;"></div>
<svg class="a" style="left:262px;top:107px;" width="19" height="19" viewBox="0 0 19 19"><rect x="0.5" y="0.5" width="12" height="11" fill="#fff" stroke="#5b8fe8" stroke-dasharray="2 1"/>
<rect x="0.5" y="0.5" width="12" height="2.5" fill="#5b8fe8"/>
<path d="M3 8V4M2 5L3 4L4 5M6 4H9" stroke="#4a7fd8" fill="none"/>
<rect x="5.5" y="6.5" width="12" height="11" fill="#fff" stroke="#5b8fe8" stroke-dasharray="2 1"/>
<rect x="5.5" y="6.5" width="12" height="2.5" fill="#5b8fe8"/>
<path d="M7.5 11Q8.5 15 9.5 12Q10.5 10 11.5 13Q12.5 15.5 13.5 12Q14.5 10 15.5 14" stroke="#4a7fd8" fill="none"/></svg>
<div class="t" style="top:109.31px;font-size:14.7px;left:285px;">NZDUSD,Daily</div>
<div class="a" style="left:1312px;top:104px;width:40px;height:22px;border:1px solid #6e87a8;border-radius:3px;background:linear-gradient(#c6d8ec 0%,#b2c8e2 45%,#9ab3d2 50%,#b4cbe6 100%)"></div>
<svg class="a" style="left:1324px;top:110px;" width="18" height="12" viewBox="0 0 18 12"><rect x="1.5" y="5.5" width="15" height="5" rx="1.5" fill="#fafafa" stroke="#4d4d4d" stroke-width="1"/></svg>
<div class="a" style="left:1356px;top:104px;width:40px;height:22px;border:1px solid #6e87a8;border-radius:3px;background:linear-gradient(#c6d8ec 0%,#b2c8e2 45%,#9ab3d2 50%,#b4cbe6 100%)"></div>
<svg class="a" style="left:1368px;top:107px;" width="18" height="18" viewBox="0 0 18 18"><rect x="1.5" y="1.5" width="15" height="15" rx="1.5" fill="#fafafa" stroke="#4d4d4d"/><rect x="5.5" y="5.5" width="7" height="6" fill="#8fa7c4" stroke="#4d4d4d"/></svg>
<div class="a" style="left:1400px;top:104px;width:41px;height:22px;border:1px solid #4f1f24;border-radius:3px;background:linear-gradient(#e8a89a 0%,#d9806e 45%,#c44a32 50%,#d0624a 100%)"></div>
<svg class="a" style="left:1411px;top:107px;" width="20" height="18" viewBox="0 0 20 18"><path d="M3 2.5L10 9L17 2.5M3 15.5L10 9L17 15.5" stroke="#555" stroke-width="5.2" stroke-linecap="round" fill="none"/><path d="M3 2.5L10 9L17 2.5M3 15.5L10 9L17 15.5" stroke="#f4f4f4" stroke-width="3.2" stroke-linecap="round" fill="none"/></svg>
<div class="a" style="left:259px;top:131px;width:1184px;height:52px;background:#000;box-shadow:inset 2px 2px 0 #6b6b6b"></div>
<svg class="a" style="left:259px;top:131px;" width="1184" height="52" viewBox="0 0 1184 52"><rect x="4.5" y="4.5" width="1122" height="80" fill="none" stroke="#fff"/><line x1="53.5" y1="5" x2="53.5" y2="52" stroke="#2f5c5c" stroke-width="1" stroke-dasharray="3 3"/><line x1="101.5" y1="5" x2="101.5" y2="52" stroke="#2f5c5c" stroke-width="1" stroke-dasharray="3 3"/><line x1="149.5" y1="5" x2="149.5" y2="52" stroke="#2f5c5c" stroke-width="1" stroke-dasharray="3 3"/><line x1="197.5" y1="5" x2="197.5" y2="52" stroke="#2f5c5c" stroke-width="1" stroke-dasharray="3 3"/><line x1="245.5" y1="5" x2="245.5" y2="52" stroke="#2f5c5c" stroke-width="1" stroke-dasharray="3 3"/><line x1="293.5" y1="5" x2="293.5" y2="52" stroke="#2f5c5c" stroke-width="1" stroke-dasharray="3 3"/><line x1="341.5" y1="5" x2="341.5" y2="52" stroke="#2f5c5c" stroke-width="1" stroke-dasharray="3 3"/><line x1="389.5" y1="5" x2="389.5" y2="52" stroke="#2f5c5c" stroke-width="1" stroke-dasharray="3 3"/><line x1="437.5" y1="5" x2="437.5" y2="52" stroke="#2f5c5c" stroke-width="1" stroke-dasharray="3 3"/><line x1="485.5" y1="5" x2="485.5" y2="52" stroke="#2f5c5c" stroke-width="1" stroke-dasharray="3 3"/><line x1="533.5" y1="5" x2="533.5" y2="52" stroke="#2f5c5c" stroke-width="1" stroke-dasharray="3 3"/><line x1="581.5" y1="5" x2="581.5" y2="52" stroke="#2f5c5c" stroke-width="1" stroke-dasharray="3 3"/><line x1="629.5" y1="5" x2="629.5" y2="52" stroke="#2f5c5c" stroke-width="1" stroke-dasharray="3 3"/><line x1="677.5" y1="5" x2="677.5" y2="52" stroke="#2f5c5c" stroke-width="1" stroke-dasharray="3 3"/><line x1="725.5" y1="5" x2="725.5" y2="52" stroke="#2f5c5c" stroke-width="1" stroke-dasharray="3 3"/><line x1="773.5" y1="5" x2="773.5" y2="52" stroke="#2f5c5c" stroke-width="1" stroke-dasharray="3 3"/><line x1="821.5" y1="5" x2="821.5" y2="52" stroke="#2f5c5c" stroke-width="1" stroke-dasharray="3 3"/><line x1="869.5" y1="5" x2="869.5" y2="52" stroke="#2f5c5c" stroke-width="1" stroke-dasharray="3 3"/><line x1="917.5" y1="5" x2="917.5" y2="52" stroke="#2f5c5c" stroke-width="1" stroke-dasharray="3 3"/><line x1="965.5" y1="5" x2="965.5" y2="52" stroke="#2f5c5c" stroke-width="1" stroke-dasharray="3 3"/><line x1="1013.5" y1="5" x2="1013.5" y2="52" stroke="#2f5c5c" stroke-width="1" stroke-dasharray="3 3"/><line x1="1061.5" y1="5" x2="1061.5" y2="52" stroke="#2f5c5c" stroke-width="1" stroke-dasharray="3 3"/><line x1="1109.5" y1="5" x2="1109.5" y2="52" stroke="#2f5c5c" stroke-width="1" stroke-dasharray="3 3"/><line x1="5" y1="45.5" x2="1126" y2="45.5" stroke="#2f5c5c" stroke-width="1" stroke-dasharray="3 3"/><line x1="1126" y1="45.5" x2="1130" y2="45.5" stroke="#fff"/><line x1="373.5" y1="34" x2="373.5" y2="52" stroke="#00ff00" stroke-width="1"/><line x1="375.5" y1="24" x2="375.5" y2="52" stroke="#fff" stroke-width="1"/><line x1="377.5" y1="35" x2="377.5" y2="52" stroke="#00ff00" stroke-width="1"/><line x1="379.5" y1="36" x2="379.5" y2="52" stroke="#00ff00" stroke-width="1"/><line x1="381.5" y1="35" x2="381.5" y2="52" stroke="#fff" stroke-width="1"/><polyline points="381.6,42.3 390.2,29.4 394.3,29.4 398.5,30.2 401.0,34.0 403.1,33.2 404.3,34.0 411.4,42.3 412.7,44.8 413.5,50.0" fill="none" stroke="#fff" stroke-width="1.1"/><path d="M8 12H17L12.5 17Z" fill="#fff"/><rect x="11" y="22" width="89" height="40" fill="#fff"/><rect x="12" y="23" width="87" height="40" fill="#0000ff"/><rect x="15" y="24" width="35" height="40" fill="#fff"/><rect x="16" y="25" width="33" height="40" fill="#008000"/><rect x="52.5" y="24" width="35" height="40" fill="#fff"/><rect x="53.5" y="25" width="33" height="40" fill="#ff0000"/><circle cx="1114.5" cy="15.5" r="6.5" fill="none" stroke="#fff" stroke-width="1.2"/><circle cx="1112" cy="13.5" r="0.9" fill="#fff"/><circle cx="1117" cy="13.5" r="0.9" fill="#fff"/><path d="M1110.5 16.5Q1114.5 21 1118.5 16.5" fill="none" stroke="#fff" stroke-width="1.1"/></svg>
<div class="t" style="top:140.52px;font-size:11.2px;left:282px;color:#fff;">NZDUSD,Daily</div>
<div class="t" style="top:152.16px;font-size:12.8px;left:268px;color:#fff;">Copyright © free-use :)</div>
<div class="t" style="top:163.42px;font-size:12.5px;left:278px;color:#fff;">haut</div>
<div class="t" style="top:163.42px;font-size:12.5px;left:318.5px;color:#fff;">bas</div>
<div class="t" style="top:140.34px;font-size:12px;left:1285.5px;color:#fff;">spreadBy2_ea</div>
<div class="t" style="top:172.42px;font-size:12.5px;left:1392.5px;color:#fff;">0.74960</div>
<div class="a" style="left:923px;top:180px;width:3px;height:1px;background:#fff;"></div>
<div class="a" style="left:249px;top:181px;width:1671px;height:2px;background:#fff;"></div>
<div class="a" style="left:249px;top:183px;width:1671px;height:1px;background:#000;"></div>
<div class="a" style="left:249px;top:184px;width:1671px;height:1px;background:#fff;"></div>
<div class="a" style="left:249px;top:185px;width:1671px;height:22px;background:#f0f0f0;"></div>
<div class="a" style="left:359px;top:181px;width:124px;height:26px;background:#fff;"></div>
<div class="a" style="left:359px;top:183px;width:1px;height:24px;background:#000;"></div>
<div class="a" style="left:482px;top:183px;width:1px;height:24px;background:#000;"></div>
<div class="a" style="left:359px;top:206px;width:124px;height:1px;background:#000;"></div>
<div class="t" style="top:189.49px;font-size:13.6px;left:268.75px;color:#6d6d6d;">EURUSD,H4</div>
<div class="t" style="top:188.36px;font-size:14.7px;left:372.5px;">NZDUSD,Daily</div>
<svg class="a" style="left:1877px;top:188px;" width="34" height="12" viewBox="0 0 34 12"><path d="M8 1L3 6L8 11Z" fill="#b8b8b8"/><path d="M26 1L31 6L26 11Z" fill="#b8b8b8"/></svg>
<div class="a" style="left:0px;top:207px;width:1920px;height:793px;background:#f0f0f0;"></div>
<div class="a" style="left:0px;top:207px;width:1920px;height:1px;background:#a0a0a0;"></div>
<div class="a" style="left:0px;top:208px;width:1920px;height:1px;background:#ffffff;"></div>
<div class="a" style="left:3px;top:231px;width:16px;height:765px;background:#d1dfed;"></div>
<div class="t" style="left:-18px;top:958px;width:60px;font-size:14px;color:#222;transform:rotate(-90deg);transform-origin:30px 7px;text-align:center">Terminal</div>
<svg class="a" style="left:5px;top:214px;" width="10" height="10" viewBox="0 0 10 10"><path d="M1.5 1.5L8.5 8.5M8.5 1.5L1.5 8.5" stroke="#000" stroke-width="1.6"/></svg>
<div class="a" style="left:20px;top:213px;width:1895px;height:1px;background:#a0a0a0;"></div>
<div class="a" style="left:20px;top:213px;width:1px;height:783px;background:#a0a0a0;"></div>
<div class="a" style="left:21px;top:214px;width:1893px;height:754px;background:#ffffff;"></div>
<div class="a" style="left:207px;top:214px;width:1px;height:26px;background:#e3e3e3;"></div>
<div class="a" style="left:467px;top:214px;width:1px;height:26px;background:#e3e3e3;"></div>
<div class="a" style="left:597px;top:214px;width:1px;height:26px;background:#e3e3e3;"></div>
<div class="a" style="left:698px;top:214px;width:1px;height:26px;background:#e3e3e3;"></div>
<div class="a" style="left:828px;top:214px;width:1px;height:26px;background:#e3e3e3;"></div>
<div class="a" style="left:972px;top:214px;width:1px;height:26px;background:#e3e3e3;"></div>
<div class="a" style="left:1116px;top:214px;width:1px;height:26px;background:#e3e3e3;"></div>
<div class="a" style="left:1260px;top:214px;width:1px;height:26px;background:#e3e3e3;"></div>
<div class="a" style="left:1404px;top:214px;width:1px;height:26px;background:#e3e3e3;"></div>
<div class="a" style="left:1548px;top:214px;width:1px;height:26px;background:#e3e3e3;"></div>
<div class="a" style="left:1692px;top:214px;width:1px;height:26px;background:#e3e3e3;"></div>
<div class="a" style="left:1913px;top:214px;width:1px;height:26px;background:#e3e3e3;"></div>
<div class="a" style="left:21px;top:240px;width:1893px;height:1px;background:#d0d0d0;"></div>
<div class="t" style="top:221.15px;font-size:14px;left:27px;">Ordre</div>
<div class="t" style="top:222.38px;font-size:9px;left:76px;color:#999;">/</div>
<div class="t" style="top:221.15px;font-size:14px;right:1458px;">Heure</div>
<div class="t" style="top:221.15px;font-size:14px;right:1328px;">Transaction</div>
<div class="t" style="top:221.15px;font-size:14px;right:1227px;">Volume</div>
<div class="t" style="top:221.15px;font-size:14px;right:1097px;">Symbole</div>
<div class="t" style="top:221.15px;font-size:14px;right:953px;">Prix</div>
<div class="t" style="top:221.15px;font-size:14px;right:809px;">S/L (Stop/Perte)</div>
<div class="t" style="top:221.15px;font-size:14px;right:665px;">T/P (Prendre/profit)</div>
<div class="t" style="top:221.15px;font-size:14px;right:521px;">Prix</div>
<div class="t" style="top:221.15px;font-size:14px;right:377px;">Commission</div>
<div class="t" style="top:221.15px;font-size:14px;right:233px;">Echange</div>
<div class="t" style="top:221.15px;font-size:14px;right:12px;">&amp;Profit</div>
<div class="a" style="left:21px;top:265px;width:1893px;height:1px;background:#d0d0d0;"></div>
<div class="a" style="left:206px;top:241px;width:1px;height:25px;background:#d0d0d0;"></div>
<div class="a" style="left:466px;top:241px;width:1px;height:25px;background:#d0d0d0;"></div>
<div class="a" style="left:596px;top:241px;width:1px;height:25px;background:#d0d0d0;"></div>
<div class="a" style="left:697px;top:241px;width:1px;height:25px;background:#d0d0d0;"></div>
<div class="a" style="left:827px;top:241px;width:1px;height:25px;background:#d0d0d0;"></div>
<div class="a" style="left:971px;top:241px;width:1px;height:25px;background:#d0d0d0;"></div>
<div class="a" style="left:1115px;top:241px;width:1px;height:25px;background:#d0d0d0;"></div>
<div class="a" style="left:1259px;top:241px;width:1px;height:25px;background:#d0d0d0;"></div>
<div class="a" style="left:1403px;top:241px;width:1px;height:25px;background:#d0d0d0;"></div>
<div class="a" style="left:1547px;top:241px;width:1px;height:25px;background:#d0d0d0;"></div>
<div class="a" style="left:1691px;top:241px;width:1px;height:25px;background:#d0d0d0;"></div>
<svg class="a" style="left:24px;top:244px;" width="19" height="19" viewBox="0 0 19 19"><defs><linearGradient id="dg0" x1="0" y1="0" x2="1" y2="1"><stop offset="0" stop-color="#fff"/><stop offset="1" stop-color="#d8d8d8"/></linearGradient></defs><path d="M0.5 1.5 Q0.5 0.5 1.5 0.5 H11 L14.5 4 V15.5 Q14.5 16.5 13.5 16.5 H1.5 Q0.5 16.5 0.5 15.5Z" fill="url(#dg0)" stroke="#6b6b6b"/><path d="M11 0.5 V4 H14.5" fill="none" stroke="#6b6b6b"/><circle cx="13.7" cy="14" r="4.2" fill="#2a8de0" stroke="#0a5fb0" stroke-width="0.8"/><circle cx="12.8" cy="12.8" r="1.4" fill="#fff" opacity="0.4"/></svg>
<div class="t" style="top:246.15px;font-size:14px;left:48px;">85022607</div>
<div class="t" style="top:246.15px;font-size:14px;right:1457px;">2019.01.07 17:18:36</div>
<div class="t" style="top:246.15px;font-size:14px;right:1327px;">buy</div>
<div class="t" style="top:246.15px;font-size:14px;right:1226px;">0.02</div>
<div class="t" style="top:246.15px;font-size:14px;right:1096px;">cadjpy</div>
<div class="t" style="top:246.15px;font-size:14px;right:952px;">81.360</div>
<div class="t" style="top:246.15px;font-size:14px;right:808px;">0.000</div>
<div class="t" style="top:246.15px;font-size:14px;right:664px;">0.000</div>
<div class="t" style="top:246.15px;font-size:14px;right:520px;">81.399</div>
<div class="t" style="top:246.15px;font-size:14px;right:376px;">-0.07</div>
<div class="t" style="top:246.15px;font-size:14px;right:232px;">0.00</div>
<div class="t" style="top:246.15px;font-size:14px;right:35px;">0.63</div>
<svg class="a" style="left:1895px;top:247px;" width="13" height="13" viewBox="0 0 13 13"><path d="M1 1L12 12M12 1L1 12" stroke="#9a9a9a" stroke-width="1.6"/></svg>
<div class="a" style="left:21px;top:266px;width:1892px;height:24px;background:#ebebeb;"></div>
<div class="a" style="left:21px;top:290px;width:1893px;height:1px;background:#d0d0d0;"></div>
<div class="a" style="left:206px;top:265px;width:1px;height:25px;background:#d0d0d0;"></div>
<div class="a" style="left:466px;top:265px;width:1px;height:25px;background:#d0d0d0;"></div>
<div class="a" style="left:596px;top:265px;width:1px;height:25px;background:#d0d0d0;"></div>
<div class="a" style="left:697px;top:265px;width:1px;height:25px;background:#d0d0d0;"></div>
<div class="a" style="left:827px;top:265px;width:1px;height:25px;background:#d0d0d0;"></div>
<div class="a" style="left:971px;top:265px;width:1px;height:25px;background:#d0d0d0;"></div>
<div class="a" style="left:1115px;top:265px;width:1px;height:25px;background:#d0d0d0;"></div>
<div class="a" style="left:1259px;top:265px;width:1px;height:25px;background:#d0d0d0;"></div>
<div class="a" style="left:1403px;top:265px;width:1px;height:25px;background:#d0d0d0;"></div>
<div class="a" style="left:1547px;top:265px;width:1px;height:25px;background:#d0d0d0;"></div>
<div class="a" style="left:1691px;top:265px;width:1px;height:25px;background:#d0d0d0;"></div>
<svg class="a" style="left:24px;top:269px;" width="19" height="19" viewBox="0 0 19 19"><defs><linearGradient id="dg1" x1="0" y1="0" x2="1" y2="1"><stop offset="0" stop-color="#fff"/><stop offset="1" stop-color="#d8d8d8"/></linearGradient></defs><path d="M0.5 1.5 Q0.5 0.5 1.5 0.5 H11 L14.5 4 V15.5 Q14.5 16.5 13.5 16.5 H1.5 Q0.5 16.5 0.5 15.5Z" fill="url(#dg1)" stroke="#6b6b6b"/><path d="M11 0.5 V4 H14.5" fill="none" stroke="#6b6b6b"/><circle cx="13.7" cy="14" r="4.2" fill="#e2451c" stroke="#b02a0a" stroke-width="0.8"/><circle cx="12.8" cy="12.8" r="1.4" fill="#fff" opacity="0.4"/></svg>
<div class="t" style="top:271.15px;font-size:14px;left:48px;">85022608</div>
<div class="t" style="top:271.15px;font-size:14px;right:1457px;">2019.01.07 17:18:36</div>
<div class="t" style="top:271.15px;font-size:14px;right:1327px;">sell</div>
<div class="t" style="top:271.15px;font-size:14px;right:1226px;">0.03</div>
<div class="t" style="top:271.15px;font-size:14px;right:1096px;">gbpaud</div>
<div class="t" style="top:271.15px;font-size:14px;right:952px;">1.79136</div>
<div class="t" style="top:271.15px;font-size:14px;right:808px;">0.00000</div>
<div class="t" style="top:271.15px;font-size:14px;right:664px;">0.00000</div>
<div class="t" style="top:271.15px;font-size:14px;right:520px;">1.79249</div>
<div class="t" style="top:271.15px;font-size:14px;right:376px;">-0.17</div>
<div class="t" style="top:271.15px;font-size:14px;right:232px;">0.00</div>
<div class="t" style="top:271.15px;font-size:14px;right:35px;">-2.11</div>
<svg class="a" style="left:1895px;top:272px;" width="13" height="13" viewBox="0 0 13 13"><path d="M1 1L12 12M12 1L1 12" stroke="#9a9a9a" stroke-width="1.6"/></svg>
<div class="a" style="left:21px;top:315px;width:1893px;height:1px;background:#d0d0d0;"></div>
<div class="a" style="left:206px;top:290px;width:1px;height:25px;background:#d0d0d0;"></div>
<div class="a" style="left:466px;top:290px;width:1px;height:25px;background:#d0d0d0;"></div>
<div class="a" style="left:596px;top:290px;width:1px;height:25px;background:#d0d0d0;"></div>
<div class="a" style="left:697px;top:290px;width:1px;height:25px;background:#d0d0d0;"></div>
<div class="a" style="left:827px;top:290px;width:1px;height:25px;background:#d0d0d0;"></div>
<div class="a" style="left:971px;top:290px;width:1px;height:25px;background:#d0d0d0;"></div>
<div class="a" style="left:1115px;top:290px;width:1px;height:25px;background:#d0d0d0;"></div>
<div class="a" style="left:1259px;top:290px;width:1px;height:25px;background:#d0d0d0;"></div>
<div class="a" style="left:1403px;top:290px;width:1px;height:25px;background:#d0d0d0;"></div>
<div class="a" style="left:1547px;top:290px;width:1px;height:25px;background:#d0d0d0;"></div>
<div class="a" style="left:1691px;top:290px;width:1px;height:25px;background:#d0d0d0;"></div>
<svg class="a" style="left:24px;top:294px;" width="19" height="19" viewBox="0 0 19 19"><defs><linearGradient id="dg2" x1="0" y1="0" x2="1" y2="1"><stop offset="0" stop-color="#fff"/><stop offset="1" stop-color="#d8d8d8"/></linearGradient></defs><path d="M0.5 1.5 Q0.5 0.5 1.5 0.5 H11 L14.5 4 V15.5 Q14.5 16.5 13.5 16.5 H1.5 Q0.5 16.5 0.5 15.5Z" fill="url(#dg2)" stroke="#6b6b6b"/><path d="M11 0.5 V4 H14.5" fill="none" stroke="#6b6b6b"/><circle cx="13.7" cy="14" r="4.2" fill="#2a8de0" stroke="#0a5fb0" stroke-width="0.8"/><circle cx="12.8" cy="12.8" r="1.4" fill="#fff" opacity="0.4"/></svg>
<div class="t" style="top:296.15px;font-size:14px;left:48px;">85022610</div>
<div class="t" style="top:296.15px;font-size:14px;right:1457px;">2019.01.07 17:18:55</div>
<div class="t" style="top:296.15px;font-size:14px;right:1327px;">buy</div>
<div class="t" style="top:296.15px;font-size:14px;right:1226px;">0.02</div>
<div class="t" style="top:296.15px;font-size:14px;right:1096px;">cadjpy</div>
<div class="t" style="top:296.15px;font-size:14px;right:952px;">81.346</div>
<div class="t" style="top:296.15px;font-size:14px;right:808px;">0.000</div>
<div class="t" style="top:296.15px;font-size:14px;right:664px;">0.000</div>
<div class="t" style="top:296.15px;font-size:14px;right:520px;">81.399</div>
<div class="t" style="top:296.15px;font-size:14px;right:376px;">-0.07</div>
<div class="t" style="top:296.15px;font-size:14px;right:232px;">0.00</div>
<div class="t" style="top:296.15px;font-size:14px;right:35px;">0.86</div>
<svg class="a" style="left:1895px;top:297px;" width="13" height="13" viewBox="0 0 13 13"><path d="M1 1L12 12M12 1L1 12" stroke="#9a9a9a" stroke-width="1.6"/></svg>
<div class="a" style="left:21px;top:316px;width:1892px;height:24px;background:#ebebeb;"></div>
<div class="a" style="left:21px;top:340px;width:1893px;height:1px;background:#d0d0d0;"></div>
<div class="a" style="left:206px;top:315px;width:1px;height:25px;background:#d0d0d0;"></div>
<div class="a" style="left:466px;top:315px;width:1px;height:25px;background:#d0d0d0;"></div>
<div class="a" style="left:596px;top:315px;width:1px;height:25px;background:#d0d0d0;"></div>
<div class="a" style="left:697px;top:315px;width:1px;height:25px;background:#d0d0d0;"></div>
<div class="a" style="left:827px;top:315px;width:1px;height:25px;background:#d0d0d0;"></div>
<div class="a" style="left:971px;top:315px;width:1px;height:25px;background:#d0d0d0;"></div>
<div class="a" style="left:1115px;top:315px;width:1px;height:25px;background:#d0d0d0;"></div>
<div class="a" style="left:1259px;top:315px;width:1px;height:25px;background:#d0d0d0;"></div>
<div class="a" style="left:1403px;top:315px;width:1px;height:25px;background:#d0d0d0;"></div>
<div class="a" style="left:1547px;top:315px;width:1px;height:25px;background:#d0d0d0;"></div>
<div class="a" style="left:1691px;top:315px;width:1px;height:25px;background:#d0d0d0;"></div>
<svg class="a" style="left:24px;top:319px;" width="19" height="19" viewBox="0 0 19 19"><defs><linearGradient id="dg3" x1="0" y1="0" x2="1" y2="1"><stop offset="0" stop-color="#fff"/><stop offset="1" stop-color="#d8d8d8"/></linearGradient></defs><path d="M0.5 1.5 Q0.5 0.5 1.5 0.5 H11 L14.5 4 V15.5 Q14.5 16.5 13.5 16.5 H1.5 Q0.5 16.5 0.5 15.5Z" fill="url(#dg3)" stroke="#6b6b6b"/><path d="M11 0.5 V4 H14.5" fill="none" stroke="#6b6b6b"/><circle cx="13.7" cy="14" r="4.2" fill="#e2451c" stroke="#b02a0a" stroke-width="0.8"/><circle cx="12.8" cy="12.8" r="1.4" fill="#fff" opacity="0.4"/></svg>
<div class="t" style="top:321.15px;font-size:14px;left:48px;">85022611</div>
<div class="t" style="top:321.15px;font-size:14px;right:1457px;">2019.01.07 17:18:55</div>
<div class="t" style="top:321.15px;font-size:14px;right:1327px;">sell</div>
<div class="t" style="top:321.15px;font-size:14px;right:1226px;">0.03</div>
<div class="t" style="top:321.15px;font-size:14px;right:1096px;">gbpcad</div>
<div class="t" style="top:321.15px;font-size:14px;right:952px;">1.70278</div>
<div class="t" style="top:321.15px;font-size:14px;right:808px;">0.00000</div>
<div class="t" style="top:321.15px;font-size:14px;right:664px;">0.00000</div>
<div class="t" style="top:321.15px;font-size:14px;right:520px;">1.70303</div>
<div class="t" style="top:321.15px;font-size:14px;right:376px;">-0.17</div>
<div class="t" style="top:321.15px;font-size:14px;right:232px;">0.00</div>
<div class="t" style="top:321.15px;font-size:14px;right:35px;">-0.49</div>
<svg class="a" style="left:1895px;top:322px;" width="13" height="13" viewBox="0 0 13 13"><path d="M1 1L12 12M12 1L1 12" stroke="#9a9a9a" stroke-width="1.6"/></svg>
<div class="a" style="left:21px;top:365px;width:1893px;height:1px;background:#d0d0d0;"></div>
<div class="a" style="left:206px;top:340px;width:1px;height:25px;background:#d0d0d0;"></div>
<div class="a" style="left:466px;top:340px;width:1px;height:25px;background:#d0d0d0;"></div>
<div class="a" style="left:596px;top:340px;width:1px;height:25px;background:#d0d0d0;"></div>
<div class="a" style="left:697px;top:340px;width:1px;height:25px;background:#d0d0d0;"></div>
<div class="a" style="left:827px;top:340px;width:1px;height:25px;background:#d0d0d0;"></div>
<div class="a" style="left:971px;top:340px;width:1px;height:25px;background:#d0d0d0;"></div>
<div class="a" style="left:1115px;top:340px;width:1px;height:25px;background:#d0d0d0;"></div>
<div class="a" style="left:1259px;top:340px;width:1px;height:25px;background:#d0d0d0;"></div>
<div class="a" style="left:1403px;top:340px;width:1px;height:25px;background:#d0d0d0;"></div>
<div class="a" style="left:1547px;top:340px;width:1px;height:25px;background:#d0d0d0;"></div>
<div class="a" style="left:1691px;top:340px;width:1px;height:25px;background:#d0d0d0;"></div>
<svg class="a" style="left:24px;top:344px;" width="19" height="19" viewBox="0 0 19 19"><defs><linearGradient id="dg4" x1="0" y1="0" x2="1" y2="1"><stop offset="0" stop-color="#fff"/><stop offset="1" stop-color="#d8d8d8"/></linearGradient></defs><path d="M0.5 1.5 Q0.5 0.5 1.5 0.5 H11 L14.5 4 V15.5 Q14.5 16.5 13.5 16.5 H1.5 Q0.5 16.5 0.5 15.5Z" fill="url(#dg4)" stroke="#6b6b6b"/><path d="M11 0.5 V4 H14.5" fill="none" stroke="#6b6b6b"/><circle cx="13.7" cy="14" r="4.2" fill="#2a8de0" stroke="#0a5fb0" stroke-width="0.8"/><circle cx="12.8" cy="12.8" r="1.4" fill="#fff" opacity="0.4"/></svg>
<div class="t" style="top:346.15px;font-size:14px;left:48px;">85022614</div>
<div class="t" style="top:346.15px;font-size:14px;right:1457px;">2019.01.07 17:19:10</div>
<div class="t" style="top:346.15px;font-size:14px;right:1327px;">buy</div>
<div class="t" style="top:346.15px;font-size:14px;right:1226px;">0.02</div>
<div class="t" style="top:346.15px;font-size:14px;right:1096px;">chfjpy</div>
<div class="t" style="top:346.15px;font-size:14px;right:952px;">110.669</div>
<div class="t" style="top:346.15px;font-size:14px;right:808px;">0.000</div>
<div class="t" style="top:346.15px;font-size:14px;right:664px;">0.000</div>
<div class="t" style="top:346.15px;font-size:14px;right:520px;">110.724</div>
<div class="t" style="top:346.15px;font-size:14px;right:376px;">-0.09</div>
<div class="t" style="top:346.15px;font-size:14px;right:232px;">0.00</div>
<div class="t" style="top:346.15px;font-size:14px;right:35px;">0.89</div>
<svg class="a" style="left:1895px;top:347px;" width="13" height="13" viewBox="0 0 13 13"><path d="M1 1L12 12M12 1L1 12" stroke="#9a9a9a" stroke-width="1.6"/></svg>
<div class="a" style="left:21px;top:366px;width:1892px;height:24px;background:#ebebeb;"></div>
<div class="a" style="left:21px;top:390px;width:1893px;height:1px;background:#d0d0d0;"></div>
<div class="a" style="left:206px;top:365px;width:1px;height:25px;background:#d0d0d0;"></div>
<div class="a" style="left:466px;top:365px;width:1px;height:25px;background:#d0d0d0;"></div>
<div class="a" style="left:596px;top:365px;width:1px;height:25px;background:#d0d0d0;"></div>
<div class="a" style="left:697px;top:365px;width:1px;height:25px;background:#d0d0d0;"></div>
<div class="a" style="left:827px;top:365px;width:1px;height:25px;background:#d0d0d0;"></div>
<div class="a" style="left:971px;top:365px;width:1px;height:25px;background:#d0d0d0;"></div>
<div class="a" style="left:1115px;top:365px;width:1px;height:25px;background:#d0d0d0;"></div>
<div class="a" style="left:1259px;top:365px;width:1px;height:25px;background:#d0d0d0;"></div>
<div class="a" style="left:1403px;top:365px;width:1px;height:25px;background:#d0d0d0;"></div>
<div class="a" style="left:1547px;top:365px;width:1px;height:25px;background:#d0d0d0;"></div>
<div class="a" style="left:1691px;top:365px;width:1px;height:25px;background:#d0d0d0;"></div>
<svg class="a" style="left:24px;top:369px;" width="19" height="19" viewBox="0 0 19 19"><defs><linearGradient id="dg5" x1="0" y1="0" x2="1" y2="1"><stop offset="0" stop-color="#fff"/><stop offset="1" stop-color="#d8d8d8"/></linearGradient></defs><path d="M0.5 1.5 Q0.5 0.5 1.5 0.5 H11 L14.5 4 V15.5 Q14.5 16.5 13.5 16.5 H1.5 Q0.5 16.5 0.5 15.5Z" fill="url(#dg5)" stroke="#6b6b6b"/><path d="M11 0.5 V4 H14.5" fill="none" stroke="#6b6b6b"/><circle cx="13.7" cy="14" r="4.2" fill="#e2451c" stroke="#b02a0a" stroke-width="0.8"/><circle cx="12.8" cy="12.8" r="1.4" fill="#fff" opacity="0.4"/></svg>
<div class="t" style="top:371.15px;font-size:14px;left:48px;">85022615</div>
<div class="t" style="top:371.15px;font-size:14px;right:1457px;">2019.01.07 17:19:10</div>
<div class="t" style="top:371.15px;font-size:14px;right:1327px;">sell</div>
<div class="t" style="top:371.15px;font-size:14px;right:1226px;">0.02</div>
<div class="t" style="top:371.15px;font-size:14px;right:1096px;">eurgbp</div>
<div class="t" style="top:371.15px;font-size:14px;right:952px;">0.89694</div>
<div class="t" style="top:371.15px;font-size:14px;right:808px;">0.00000</div>
<div class="t" style="top:371.15px;font-size:14px;right:664px;">0.00000</div>
<div class="t" style="top:371.15px;font-size:14px;right:520px;">0.89702</div>
<div class="t" style="top:371.15px;font-size:14px;right:376px;">-0.10</div>
<div class="t" style="top:371.15px;font-size:14px;right:232px;">0.00</div>
<div class="t" style="top:371.15px;font-size:14px;right:35px;">-0.18</div>
<svg class="a" style="left:1895px;top:372px;" width="13" height="13" viewBox="0 0 13 13"><path d="M1 1L12 12M12 1L1 12" stroke="#9a9a9a" stroke-width="1.6"/></svg>
<div class="a" style="left:21px;top:415px;width:1893px;height:1px;background:#d0d0d0;"></div>
<div class="a" style="left:206px;top:390px;width:1px;height:25px;background:#d0d0d0;"></div>
<div class="a" style="left:466px;top:390px;width:1px;height:25px;background:#d0d0d0;"></div>
<div class="a" style="left:596px;top:390px;width:1px;height:25px;background:#d0d0d0;"></div>
<div class="a" style="left:697px;top:390px;width:1px;height:25px;background:#d0d0d0;"></div>
<div class="a" style="left:827px;top:390px;width:1px;height:25px;background:#d0d0d0;"></div>
<div class="a" style="left:971px;top:390px;width:1px;height:25px;background:#d0d0d0;"></div>
<div class="a" style="left:1115px;top:390px;width:1px;height:25px;background:#d0d0d0;"></div>
<div class="a" style="left:1259px;top:390px;width:1px;height:25px;background:#d0d0d0;"></div>
<div class="a" style="left:1403px;top:390px;width:1px;height:25px;background:#d0d0d0;"></div>
<div class="a" style="left:1547px;top:390px;width:1px;height:25px;background:#d0d0d0;"></div>
<div class="a" style="left:1691px;top:390px;width:1px;height:25px;background:#d0d0d0;"></div>
<svg class="a" style="left:24px;top:394px;" width="19" height="19" viewBox="0 0 19 19"><defs><linearGradient id="dg6" x1="0" y1="0" x2="1" y2="1"><stop offset="0" stop-color="#fff"/><stop offset="1" stop-color="#d8d8d8"/></linearGradient></defs><path d="M0.5 1.5 Q0.5 0.5 1.5 0.5 H11 L14.5 4 V15.5 Q14.5 16.5 13.5 16.5 H1.5 Q0.5 16.5 0.5 15.5Z" fill="url(#dg6)" stroke="#6b6b6b"/><path d="M11 0.5 V4 H14.5" fill="none" stroke="#6b6b6b"/><circle cx="13.7" cy="14" r="4.2" fill="#2a8de0" stroke="#0a5fb0" stroke-width="0.8"/><circle cx="12.8" cy="12.8" r="1.4" fill="#fff" opacity="0.4"/></svg>
<div class="t" style="top:396.15px;font-size:14px;left:48px;">85022616</div>
<div class="t" style="top:396.15px;font-size:14px;right:1457px;">2019.01.07 17:19:22</div>
<div class="t" style="top:396.15px;font-size:14px;right:1327px;">buy</div>
<div class="t" style="top:396.15px;font-size:14px;right:1226px;">0.02</div>
<div class="t" style="top:396.15px;font-size:14px;right:1096px;">gbpchf</div>
<div class="t" style="top:396.15px;font-size:14px;right:952px;">1.25167</div>
<div class="t" style="top:396.15px;font-size:14px;right:808px;">0.00000</div>
<div class="t" style="top:396.15px;font-size:14px;right:664px;">0.00000</div>
<div class="t" style="top:396.15px;font-size:14px;right:520px;">1.25185</div>
<div class="t" style="top:396.15px;font-size:14px;right:376px;">-0.11</div>
<div class="t" style="top:396.15px;font-size:14px;right:232px;">0.00</div>
<div class="t" style="top:396.15px;font-size:14px;right:35px;">0.32</div>
<svg class="a" style="left:1895px;top:397px;" width="13" height="13" viewBox="0 0 13 13"><path d="M1 1L12 12M12 1L1 12" stroke="#9a9a9a" stroke-width="1.6"/></svg>
<div class="a" style="left:21px;top:416px;width:1892px;height:24px;background:#ebebeb;"></div>
<div class="a" style="left:21px;top:440px;width:1893px;height:1px;background:#d0d0d0;"></div>
<div class="a" style="left:206px;top:415px;width:1px;height:25px;background:#d0d0d0;"></div>
<div class="a" style="left:466px;top:415px;width:1px;height:25px;background:#d0d0d0;"></div>
<div class="a" style="left:596px;top:415px;width:1px;height:25px;background:#d0d0d0;"></div>
<div class="a" style="left:697px;top:415px;width:1px;height:25px;background:#d0d0d0;"></div>
<div class="a" style="left:827px;top:415px;width:1px;height:25px;background:#d0d0d0;"></div>
<div class="a" style="left:971px;top:415px;width:1px;height:25px;background:#d0d0d0;"></div>
<div class="a" style="left:1115px;top:415px;width:1px;height:25px;background:#d0d0d0;"></div>
<div class="a" style="left:1259px;top:415px;width:1px;height:25px;background:#d0d0d0;"></div>
<div class="a" style="left:1403px;top:415px;width:1px;height:25px;background:#d0d0d0;"></div>
<div class="a" style="left:1547px;top:415px;width:1px;height:25px;background:#d0d0d0;"></div>
<div class="a" style="left:1691px;top:415px;width:1px;height:25px;background:#d0d0d0;"></div>
<svg class="a" style="left:24px;top:419px;" width="19" height="19" viewBox="0 0 19 19"><defs><linearGradient id="dg7" x1="0" y1="0" x2="1" y2="1"><stop offset="0" stop-color="#fff"/><stop offset="1" stop-color="#d8d8d8"/></linearGradient></defs><path d="M0.5 1.5 Q0.5 0.5 1.5 0.5 H11 L14.5 4 V15.5 Q14.5 16.5 13.5 16.5 H1.5 Q0.5 16.5 0.5 15.5Z" fill="url(#dg7)" stroke="#6b6b6b"/><path d="M11 0.5 V4 H14.5" fill="none" stroke="#6b6b6b"/><circle cx="13.7" cy="14" r="4.2" fill="#2a8de0" stroke="#0a5fb0" stroke-width="0.8"/><circle cx="12.8" cy="12.8" r="1.4" fill="#fff" opacity="0.4"/></svg>
<div class="t" style="top:421.15px;font-size:14px;left:48px;">85022626</div>
<div class="t" style="top:421.15px;font-size:14px;right:1457px;">2019.01.07 17:20:11</div>
<div class="t" style="top:421.15px;font-size:14px;right:1327px;">buy</div>
<div class="t" style="top:421.15px;font-size:14px;right:1226px;">0.03</div>
<div class="t" style="top:421.15px;font-size:14px;right:1096px;">audnzd</div>
<div class="t" style="top:421.15px;font-size:14px;right:952px;">1.05516</div>
<div class="t" style="top:421.15px;font-size:14px;right:808px;">0.00000</div>
<div class="t" style="top:421.15px;font-size:14px;right:664px;">0.00000</div>
<div class="t" style="top:421.15px;font-size:14px;right:520px;">1.05548</div>
<div class="t" style="top:421.15px;font-size:14px;right:376px;">-0.09</div>
<div class="t" style="top:421.15px;font-size:14px;right:232px;">0.00</div>
<div class="t" style="top:421.15px;font-size:14px;right:35px;">0.56</div>
<svg class="a" style="left:1895px;top:422px;" width="13" height="13" viewBox="0 0 13 13"><path d="M1 1L12 12M12 1L1 12" stroke="#9a9a9a" stroke-width="1.6"/></svg>
<div class="a" style="left:21px;top:465px;width:1893px;height:1px;background:#d0d0d0;"></div>
<div class="a" style="left:206px;top:440px;width:1px;height:25px;background:#d0d0d0;"></div>
<div class="a" style="left:466px;top:440px;width:1px;height:25px;background:#d0d0d0;"></div>
<div class="a" style="left:596px;top:440px;width:1px;height:25px;background:#d0d0d0;"></div>
<div class="a" style="left:697px;top:440px;width:1px;height:25px;background:#d0d0d0;"></div>
<div class="a" style="left:827px;top:440px;width:1px;height:25px;background:#d0d0d0;"></div>
<div class="a" style="left:971px;top:440px;width:1px;height:25px;background:#d0d0d0;"></div>
<div class="a" style="left:1115px;top:440px;width:1px;height:25px;background:#d0d0d0;"></div>
<div class="a" style="left:1259px;top:440px;width:1px;height:25px;background:#d0d0d0;"></div>
<div class="a" style="left:1403px;top:440px;width:1px;height:25px;background:#d0d0d0;"></div>
<div class="a" style="left:1547px;top:440px;width:1px;height:25px;background:#d0d0d0;"></div>
<div class="a" style="left:1691px;top:440px;width:1px;height:25px;background:#d0d0d0;"></div>
<svg class="a" style="left:24px;top:444px;" width="19" height="19" viewBox="0 0 19 19"><defs><linearGradient id="dg8" x1="0" y1="0" x2="1" y2="1"><stop offset="0" stop-color="#fff"/><stop offset="1" stop-color="#d8d8d8"/></linearGradient></defs><path d="M0.5 1.5 Q0.5 0.5 1.5 0.5 H11 L14.5 4 V15.5 Q14.5 16.5 13.5 16.5 H1.5 Q0.5 16.5 0.5 15.5Z" fill="url(#dg8)" stroke="#6b6b6b"/><path d="M11 0.5 V4 H14.5" fill="none" stroke="#6b6b6b"/><circle cx="13.7" cy="14" r="4.2" fill="#e2451c" stroke="#b02a0a" stroke-width="0.8"/><circle cx="12.8" cy="12.8" r="1.4" fill="#fff" opacity="0.4"/></svg>
<div class="t" style="top:446.15px;font-size:14px;left:48px;">85022634</div>
<div class="t" style="top:446.15px;font-size:14px;right:1457px;">2019.01.07 17:20:59</div>
<div class="t" style="top:446.15px;font-size:14px;right:1327px;">sell</div>
<div class="t" style="top:446.15px;font-size:14px;right:1226px;">0.03</div>
<div class="t" style="top:446.15px;font-size:14px;right:1096px;">eurcad</div>
<div class="t" style="top:446.15px;font-size:14px;right:952px;">1.52778</div>
<div class="t" style="top:446.15px;font-size:14px;right:808px;">0.00000</div>
<div class="t" style="top:446.15px;font-size:14px;right:664px;">0.00000</div>
<div class="t" style="top:446.15px;font-size:14px;right:520px;">1.52757</div>
<div class="t" style="top:446.15px;font-size:14px;right:376px;">-0.15</div>
<div class="t" style="top:446.15px;font-size:14px;right:232px;">0.00</div>
<div class="t" style="top:446.15px;font-size:14px;right:35px;">0.41</div>
<svg class="a" style="left:1895px;top:447px;" width="13" height="13" viewBox="0 0 13 13"><path d="M1 1L12 12M12 1L1 12" stroke="#9a9a9a" stroke-width="1.6"/></svg>
<div class="a" style="left:21px;top:466px;width:1892px;height:24px;background:#ebebeb;"></div>
<div class="a" style="left:21px;top:490px;width:1893px;height:1px;background:#d0d0d0;"></div>
<div class="a" style="left:206px;top:465px;width:1px;height:25px;background:#d0d0d0;"></div>
<div class="a" style="left:466px;top:465px;width:1px;height:25px;background:#d0d0d0;"></div>
<div class="a" style="left:596px;top:465px;width:1px;height:25px;background:#d0d0d0;"></div>
<div class="a" style="left:697px;top:465px;width:1px;height:25px;background:#d0d0d0;"></div>
<div class="a" style="left:827px;top:465px;width:1px;height:25px;background:#d0d0d0;"></div>
<div class="a" style="left:971px;top:465px;width:1px;height:25px;background:#d0d0d0;"></div>
<div class="a" style="left:1115px;top:465px;width:1px;height:25px;background:#d0d0d0;"></div>
<div class="a" style="left:1259px;top:465px;width:1px;height:25px;background:#d0d0d0;"></div>
<div class="a" style="left:1403px;top:465px;width:1px;height:25px;background:#d0d0d0;"></div>
<div class="a" style="left:1547px;top:465px;width:1px;height:25px;background:#d0d0d0;"></div>
<div class="a" style="left:1691px;top:465px;width:1px;height:25px;background:#d0d0d0;"></div>
<svg class="a" style="left:24px;top:469px;" width="19" height="19" viewBox="0 0 19 19"><defs><linearGradient id="dg9" x1="0" y1="0" x2="1" y2="1"><stop offset="0" stop-color="#fff"/><stop offset="1" stop-color="#d8d8d8"/></linearGradient></defs><path d="M0.5 1.5 Q0.5 0.5 1.5 0.5 H11 L14.5 4 V15.5 Q14.5 16.5 13.5 16.5 H1.5 Q0.5 16.5 0.5 15.5Z" fill="url(#dg9)" stroke="#6b6b6b"/><path d="M11 0.5 V4 H14.5" fill="none" stroke="#6b6b6b"/><circle cx="13.7" cy="14" r="4.2" fill="#2a8de0" stroke="#0a5fb0" stroke-width="0.8"/><circle cx="12.8" cy="12.8" r="1.4" fill="#fff" opacity="0.4"/></svg>
<div class="t" style="top:471.15px;font-size:14px;left:48px;">85022635</div>
<div class="t" style="top:471.15px;font-size:14px;right:1457px;">2019.01.07 17:20:59</div>
<div class="t" style="top:471.15px;font-size:14px;right:1327px;">buy</div>
<div class="t" style="top:471.15px;font-size:14px;right:1226px;">0.02</div>
<div class="t" style="top:471.15px;font-size:14px;right:1096px;">gbpchf</div>
<div class="t" style="top:471.15px;font-size:14px;right:952px;">1.25155</div>
<div class="t" style="top:471.15px;font-size:14px;right:808px;">0.00000</div>
<div class="t" style="top:471.15px;font-size:14px;right:664px;">0.00000</div>
<div class="t" style="top:471.15px;font-size:14px;right:520px;">1.25185</div>
<div class="t" style="top:471.15px;font-size:14px;right:376px;">-0.11</div>
<div class="t" style="top:471.15px;font-size:14px;right:232px;">0.00</div>
<div class="t" style="top:471.15px;font-size:14px;right:35px;">0.53</div>
<svg class="a" style="left:1895px;top:472px;" width="13" height="13" viewBox="0 0 13 13"><path d="M1 1L12 12M12 1L1 12" stroke="#9a9a9a" stroke-width="1.6"/></svg>
<div class="a" style="left:21px;top:515px;width:1893px;height:1px;background:#d0d0d0;"></div>
<div class="a" style="left:206px;top:490px;width:1px;height:25px;background:#d0d0d0;"></div>
<div class="a" style="left:466px;top:490px;width:1px;height:25px;background:#d0d0d0;"></div>
<div class="a" style="left:596px;top:490px;width:1px;height:25px;background:#d0d0d0;"></div>
<div class="a" style="left:697px;top:490px;width:1px;height:25px;background:#d0d0d0;"></div>
<div class="a" style="left:827px;top:490px;width:1px;height:25px;background:#d0d0d0;"></div>
<div class="a" style="left:971px;top:490px;width:1px;height:25px;background:#d0d0d0;"></div>
<div class="a" style="left:1115px;top:490px;width:1px;height:25px;background:#d0d0d0;"></div>
<div class="a" style="left:1259px;top:490px;width:1px;height:25px;background:#d0d0d0;"></div>
<div class="a" style="left:1403px;top:490px;width:1px;height:25px;background:#d0d0d0;"></div>
<div class="a" style="left:1547px;top:490px;width:1px;height:25px;background:#d0d0d0;"></div>
<div class="a" style="left:1691px;top:490px;width:1px;height:25px;background:#d0d0d0;"></div>
<svg class="a" style="left:24px;top:494px;" width="19" height="19" viewBox="0 0 19 19"><defs><linearGradient id="dg10" x1="0" y1="0" x2="1" y2="1"><stop offset="0" stop-color="#fff"/><stop offset="1" stop-color="#d8d8d8"/></linearGradient></defs><path d="M0.5 1.5 Q0.5 0.5 1.5 0.5 H11 L14.5 4 V15.5 Q14.5 16.5 13.5 16.5 H1.5 Q0.5 16.5 0.5 15.5Z" fill="url(#dg10)" stroke="#6b6b6b"/><path d="M11 0.5 V4 H14.5" fill="none" stroke="#6b6b6b"/><circle cx="13.7" cy="14" r="4.2" fill="#e2451c" stroke="#b02a0a" stroke-width="0.8"/><circle cx="12.8" cy="12.8" r="1.4" fill="#fff" opacity="0.4"/></svg>
<div class="t" style="top:496.15px;font-size:14px;left:48px;">85022637</div>
<div class="t" style="top:496.15px;font-size:14px;right:1457px;">2019.01.07 17:21:09</div>
<div class="t" style="top:496.15px;font-size:14px;right:1327px;">sell</div>
<div class="t" style="top:496.15px;font-size:14px;right:1226px;">0.03</div>
<div class="t" style="top:496.15px;font-size:14px;right:1096px;">eurcad</div>
<div class="t" style="top:496.15px;font-size:14px;right:952px;">1.52782</div>
<div class="t" style="top:496.15px;font-size:14px;right:808px;">0.00000</div>
<div class="t" style="top:496.15px;font-size:14px;right:664px;">0.00000</div>
<div class="t" style="top:496.15px;font-size:14px;right:520px;">1.52757</div>
<div class="t" style="top:496.15px;font-size:14px;right:376px;">-0.15</div>
<div class="t" style="top:496.15px;font-size:14px;right:232px;">0.00</div>
<div class="t" style="top:496.15px;font-size:14px;right:35px;">0.49</div>
<svg class="a" style="left:1895px;top:497px;" width="13" height="13" viewBox="0 0 13 13"><path d="M1 1L12 12M12 1L1 12" stroke="#9a9a9a" stroke-width="1.6"/></svg>
<div class="a" style="left:21px;top:516px;width:1892px;height:24px;background:#ebebeb;"></div>
<div class="a" style="left:21px;top:540px;width:1893px;height:1px;background:#d0d0d0;"></div>
<div class="a" style="left:206px;top:515px;width:1px;height:25px;background:#d0d0d0;"></div>
<div class="a" style="left:466px;top:515px;width:1px;height:25px;background:#d0d0d0;"></div>
<div class="a" style="left:596px;top:515px;width:1px;height:25px;background:#d0d0d0;"></div>
<div class="a" style="left:697px;top:515px;width:1px;height:25px;background:#d0d0d0;"></div>
<div class="a" style="left:827px;top:515px;width:1px;height:25px;background:#d0d0d0;"></div>
<div class="a" style="left:971px;top:515px;width:1px;height:25px;background:#d0d0d0;"></div>
<div class="a" style="left:1115px;top:515px;width:1px;height:25px;background:#d0d0d0;"></div>
<div class="a" style="left:1259px;top:515px;width:1px;height:25px;background:#d0d0d0;"></div>
<div class="a" style="left:1403px;top:515px;width:1px;height:25px;background:#d0d0d0;"></div>
<div class="a" style="left:1547px;top:515px;width:1px;height:25px;background:#d0d0d0;"></div>
<div class="a" style="left:1691px;top:515px;width:1px;height:25px;background:#d0d0d0;"></div>
<svg class="a" style="left:24px;top:519px;" width="19" height="19" viewBox="0 0 19 19"><defs><linearGradient id="dg11" x1="0" y1="0" x2="1" y2="1"><stop offset="0" stop-color="#fff"/><stop offset="1" stop-color="#d8d8d8"/></linearGradient></defs><path d="M0.5 1.5 Q0.5 0.5 1.5 0.5 H11 L14.5 4 V15.5 Q14.5 16.5 13.5 16.5 H1.5 Q0.5 16.5 0.5 15.5Z" fill="url(#dg11)" stroke="#6b6b6b"/><path d="M11 0.5 V4 H14.5" fill="none" stroke="#6b6b6b"/><circle cx="13.7" cy="14" r="4.2" fill="#2a8de0" stroke="#0a5fb0" stroke-width="0.8"/><circle cx="12.8" cy="12.8" r="1.4" fill="#fff" opacity="0.4"/></svg>
<div class="t" style="top:521.15px;font-size:14px;left:48px;">85022638</div>
<div class="t" style="top:521.15px;font-size:14px;right:1457px;">2019.01.07 17:21:09</div>
<div class="t" style="top:521.15px;font-size:14px;right:1327px;">buy</div>
<div class="t" style="top:521.15px;font-size:14px;right:1226px;">0.02</div>
<div class="t" style="top:521.15px;font-size:14px;right:1096px;">gbpusd</div>
<div class="t" style="top:521.15px;font-size:14px;right:952px;">1.27802</div>
<div class="t" style="top:521.15px;font-size:14px;right:808px;">0.00000</div>
<div class="t" style="top:521.15px;font-size:14px;right:664px;">0.00000</div>
<div class="t" style="top:521.15px;font-size:14px;right:520px;">1.27827</div>
<div class="t" style="top:521.15px;font-size:14px;right:376px;">-0.11</div>
<div class="t" style="top:521.15px;font-size:14px;right:232px;">0.00</div>
<div class="t" style="top:521.15px;font-size:14px;right:35px;">0.44</div>
<svg class="a" style="left:1895px;top:522px;" width="13" height="13" viewBox="0 0 13 13"><path d="M1 1L12 12M12 1L1 12" stroke="#9a9a9a" stroke-width="1.6"/></svg>
<div class="a" style="left:21px;top:565px;width:1893px;height:1px;background:#d0d0d0;"></div>
<div class="a" style="left:206px;top:540px;width:1px;height:25px;background:#d0d0d0;"></div>
<div class="a" style="left:466px;top:540px;width:1px;height:25px;background:#d0d0d0;"></div>
<div class="a" style="left:596px;top:540px;width:1px;height:25px;background:#d0d0d0;"></div>
<div class="a" style="left:697px;top:540px;width:1px;height:25px;background:#d0d0d0;"></div>
<div class="a" style="left:827px;top:540px;width:1px;height:25px;background:#d0d0d0;"></div>
<div class="a" style="left:971px;top:540px;width:1px;height:25px;background:#d0d0d0;"></div>
<div class="a" style="left:1115px;top:540px;width:1px;height:25px;background:#d0d0d0;"></div>
<div class="a" style="left:1259px;top:540px;width:1px;height:25px;background:#d0d0d0;"></div>
<div class="a" style="left:1403px;top:540px;width:1px;height:25px;background:#d0d0d0;"></div>
<div class="a" style="left:1547px;top:540px;width:1px;height:25px;background:#d0d0d0;"></div>
<div class="a" style="left:1691px;top:540px;width:1px;height:25px;background:#d0d0d0;"></div>
<svg class="a" style="left:24px;top:544px;" width="19" height="19" viewBox="0 0 19 19"><defs><linearGradient id="dg12" x1="0" y1="0" x2="1" y2="1"><stop offset="0" stop-color="#fff"/><stop offset="1" stop-color="#d8d8d8"/></linearGradient></defs><path d="M0.5 1.5 Q0.5 0.5 1.5 0.5 H11 L14.5 4 V15.5 Q14.5 16.5 13.5 16.5 H1.5 Q0.5 16.5 0.5 15.5Z" fill="url(#dg12)" stroke="#6b6b6b"/><path d="M11 0.5 V4 H14.5" fill="none" stroke="#6b6b6b"/><circle cx="13.7" cy="14" r="4.2" fill="#2a8de0" stroke="#0a5fb0" stroke-width="0.8"/><circle cx="12.8" cy="12.8" r="1.4" fill="#fff" opacity="0.4"/></svg>
<div class="t" style="top:546.15px;font-size:14px;left:48px;">85022641</div>
<div class="t" style="top:546.15px;font-size:14px;right:1457px;">2019.01.07 17:21:25</div>
<div class="t" style="top:546.15px;font-size:14px;right:1327px;">buy</div>
<div class="t" style="top:546.15px;font-size:14px;right:1226px;">0.02</div>
<div class="t" style="top:546.15px;font-size:14px;right:1096px;">gbpchf</div>
<div class="t" style="top:546.15px;font-size:14px;right:952px;">1.25169</div>
<div class="t" style="top:546.15px;font-size:14px;right:808px;">0.00000</div>
<div class="t" style="top:546.15px;font-size:14px;right:664px;">0.00000</div>
<div class="t" style="top:546.15px;font-size:14px;right:520px;">1.25185</div>
<div class="t" style="top:546.15px;font-size:14px;right:376px;">-0.11</div>
<div class="t" style="top:546.15px;font-size:14px;right:232px;">0.00</div>
<div class="t" style="top:546.15px;font-size:14px;right:35px;">0.28</div>
<svg class="a" style="left:1895px;top:547px;" width="13" height="13" viewBox="0 0 13 13"><path d="M1 1L12 12M12 1L1 12" stroke="#9a9a9a" stroke-width="1.6"/></svg>
<div class="a" style="left:21px;top:566px;width:1892px;height:24px;background:#ebebeb;"></div>
<div class="a" style="left:21px;top:590px;width:1893px;height:1px;background:#d0d0d0;"></div>
<div class="a" style="left:206px;top:565px;width:1px;height:25px;background:#d0d0d0;"></div>
<div class="a" style="left:466px;top:565px;width:1px;height:25px;background:#d0d0d0;"></div>
<div class="a" style="left:596px;top:565px;width:1px;height:25px;background:#d0d0d0;"></div>
<div class="a" style="left:697px;top:565px;width:1px;height:25px;background:#d0d0d0;"></div>
<div class="a" style="left:827px;top:565px;width:1px;height:25px;background:#d0d0d0;"></div>
<div class="a" style="left:971px;top:565px;width:1px;height:25px;background:#d0d0d0;"></div>
<div class="a" style="left:1115px;top:565px;width:1px;height:25px;background:#d0d0d0;"></div>
<div class="a" style="left:1259px;top:565px;width:1px;height:25px;background:#d0d0d0;"></div>
<div class="a" style="left:1403px;top:565px;width:1px;height:25px;background:#d0d0d0;"></div>
<div class="a" style="left:1547px;top:565px;width:1px;height:25px;background:#d0d0d0;"></div>
<div class="a" style="left:1691px;top:565px;width:1px;height:25px;background:#d0d0d0;"></div>
<svg class="a" style="left:24px;top:569px;" width="19" height="19" viewBox="0 0 19 19"><defs><linearGradient id="dg13" x1="0" y1="0" x2="1" y2="1"><stop offset="0" stop-color="#fff"/><stop offset="1" stop-color="#d8d8d8"/></linearGradient></defs><path d="M0.5 1.5 Q0.5 0.5 1.5 0.5 H11 L14.5 4 V15.5 Q14.5 16.5 13.5 16.5 H1.5 Q0.5 16.5 0.5 15.5Z" fill="url(#dg13)" stroke="#6b6b6b"/><path d="M11 0.5 V4 H14.5" fill="none" stroke="#6b6b6b"/><circle cx="13.7" cy="14" r="4.2" fill="#2a8de0" stroke="#0a5fb0" stroke-width="0.8"/><circle cx="12.8" cy="12.8" r="1.4" fill="#fff" opacity="0.4"/></svg>
<div class="t" style="top:571.15px;font-size:14px;left:48px;">85022642</div>
<div class="t" style="top:571.15px;font-size:14px;right:1457px;">2019.01.07 17:21:45</div>
<div class="t" style="top:571.15px;font-size:14px;right:1327px;">buy</div>
<div class="t" style="top:571.15px;font-size:14px;right:1226px;">0.02</div>
<div class="t" style="top:571.15px;font-size:14px;right:1096px;">eurchf</div>
<div class="t" style="top:571.15px;font-size:14px;right:952px;">1.12297</div>
<div class="t" style="top:571.15px;font-size:14px;right:808px;">0.00000</div>
<div class="t" style="top:571.15px;font-size:14px;right:664px;">0.00000</div>
<div class="t" style="top:571.15px;font-size:14px;right:520px;">1.12291</div>
<div class="t" style="top:571.15px;font-size:14px;right:376px;">-0.10</div>
<div class="t" style="top:571.15px;font-size:14px;right:232px;">0.00</div>
<div class="t" style="top:571.15px;font-size:14px;right:35px;">-0.11</div>
<svg class="a" style="left:1895px;top:572px;" width="13" height="13" viewBox="0 0 13 13"><path d="M1 1L12 12M12 1L1 12" stroke="#9a9a9a" stroke-width="1.6"/></svg>
<div class="a" style="left:21px;top:615px;width:1893px;height:1px;background:#d0d0d0;"></div>
<div class="a" style="left:206px;top:590px;width:1px;height:25px;background:#d0d0d0;"></div>
<div class="a" style="left:466px;top:590px;width:1px;height:25px;background:#d0d0d0;"></div>
<div class="a" style="left:596px;top:590px;width:1px;height:25px;background:#d0d0d0;"></div>
<div class="a" style="left:697px;top:590px;width:1px;height:25px;background:#d0d0d0;"></div>
<div class="a" style="left:827px;top:590px;width:1px;height:25px;background:#d0d0d0;"></div>
<div class="a" style="left:971px;top:590px;width:1px;height:25px;background:#d0d0d0;"></div>
<div class="a" style="left:1115px;top:590px;width:1px;height:25px;background:#d0d0d0;"></div>
<div class="a" style="left:1259px;top:590px;width:1px;height:25px;background:#d0d0d0;"></div>
<div class="a" style="left:1403px;top:590px;width:1px;height:25px;background:#d0d0d0;"></div>
<div class="a" style="left:1547px;top:590px;width:1px;height:25px;background:#d0d0d0;"></div>
<div class="a" style="left:1691px;top:590px;width:1px;height:25px;background:#d0d0d0;"></div>
<svg class="a" style="left:24px;top:594px;" width="19" height="19" viewBox="0 0 19 19"><defs><linearGradient id="dg14" x1="0" y1="0" x2="1" y2="1"><stop offset="0" stop-color="#fff"/><stop offset="1" stop-color="#d8d8d8"/></linearGradient></defs><path d="M0.5 1.5 Q0.5 0.5 1.5 0.5 H11 L14.5 4 V15.5 Q14.5 16.5 13.5 16.5 H1.5 Q0.5 16.5 0.5 15.5Z" fill="url(#dg14)" stroke="#6b6b6b"/><path d="M11 0.5 V4 H14.5" fill="none" stroke="#6b6b6b"/><circle cx="13.7" cy="14" r="4.2" fill="#e2451c" stroke="#b02a0a" stroke-width="0.8"/><circle cx="12.8" cy="12.8" r="1.4" fill="#fff" opacity="0.4"/></svg>
<div class="t" style="top:596.15px;font-size:14px;left:48px;">85022643</div>
<div class="t" style="top:596.15px;font-size:14px;right:1457px;">2019.01.07 17:21:47</div>
<div class="t" style="top:596.15px;font-size:14px;right:1327px;">sell</div>
<div class="t" style="top:596.15px;font-size:14px;right:1226px;">0.03</div>
<div class="t" style="top:596.15px;font-size:14px;right:1096px;">gbpaud</div>
<div class="t" style="top:596.15px;font-size:14px;right:952px;">1.79238</div>
<div class="t" style="top:596.15px;font-size:14px;right:808px;">0.00000</div>
<div class="t" style="top:596.15px;font-size:14px;right:664px;">0.00000</div>
<div class="t" style="top:596.15px;font-size:14px;right:520px;">1.79249</div>
<div class="t" style="top:596.15px;font-size:14px;right:376px;">-0.17</div>
<div class="t" style="top:596.15px;font-size:14px;right:232px;">0.00</div>
<div class="t" style="top:596.15px;font-size:14px;right:35px;">-0.21</div>
<svg class="a" style="left:1895px;top:597px;" width="13" height="13" viewBox="0 0 13 13"><path d="M1 1L12 12M12 1L1 12" stroke="#9a9a9a" stroke-width="1.6"/></svg>
<div class="a" style="left:21px;top:615px;width:1892px;height:25px;background:#0078d7;"></div>
<div class="a" style="left:21px;top:640px;width:1893px;height:1px;background:#d0d0d0;"></div>
<div class="a" style="left:206px;top:615px;width:1px;height:25px;background:#d0d0d0;"></div>
<div class="a" style="left:466px;top:615px;width:1px;height:25px;background:#d0d0d0;"></div>
<div class="a" style="left:596px;top:615px;width:1px;height:25px;background:#d0d0d0;"></div>
<div class="a" style="left:697px;top:615px;width:1px;height:25px;background:#d0d0d0;"></div>
<div class="a" style="left:827px;top:615px;width:1px;height:25px;background:#d0d0d0;"></div>
<div class="a" style="left:971px;top:615px;width:1px;height:25px;background:#d0d0d0;"></div>
<div class="a" style="left:1115px;top:615px;width:1px;height:25px;background:#d0d0d0;"></div>
<div class="a" style="left:1259px;top:615px;width:1px;height:25px;background:#d0d0d0;"></div>
<div class="a" style="left:1403px;top:615px;width:1px;height:25px;background:#d0d0d0;"></div>
<div class="a" style="left:1547px;top:615px;width:1px;height:25px;background:#d0d0d0;"></div>
<div class="a" style="left:1691px;top:615px;width:1px;height:25px;background:#d0d0d0;"></div>
<svg class="a" style="left:24px;top:619px;" width="19" height="19" viewBox="0 0 19 19"><defs><linearGradient id="dg15" x1="0" y1="0" x2="1" y2="1"><stop offset="0" stop-color="#fff"/><stop offset="1" stop-color="#d8d8d8"/></linearGradient></defs><path d="M0.5 1.5 Q0.5 0.5 1.5 0.5 H11 L14.5 4 V15.5 Q14.5 16.5 13.5 16.5 H1.5 Q0.5 16.5 0.5 15.5Z" fill="url(#dg15)" stroke="#6b6b6b"/><path d="M11 0.5 V4 H14.5" fill="none" stroke="#6b6b6b"/><circle cx="13.7" cy="14" r="4.2" fill="#e2451c" stroke="#b02a0a" stroke-width="0.8"/><circle cx="12.8" cy="12.8" r="1.4" fill="#fff" opacity="0.4"/></svg>
<div class="t" style="top:621.15px;font-size:14px;left:48px;color:#fff;">85022644</div>
<div class="t" style="top:621.15px;font-size:14px;right:1457px;color:#fff;">2019.01.07 17:21:59</div>
<div class="t" style="top:621.15px;font-size:14px;right:1327px;color:#fff;">sell</div>
<div class="t" style="top:621.15px;font-size:14px;right:1226px;color:#fff;">0.02</div>
<div class="t" style="top:621.15px;font-size:14px;right:1096px;color:#fff;">eurchf</div>
<div class="t" style="top:621.15px;font-size:14px;right:952px;color:#fff;">1.12278</div>
<div class="t" style="top:621.15px;font-size:14px;right:808px;color:#fff;">0.00000</div>
<div class="t" style="top:621.15px;font-size:14px;right:664px;color:#fff;">0.00000</div>
<div class="t" style="top:621.15px;font-size:14px;right:520px;color:#fff;">1.12302</div>
<div class="t" style="top:621.15px;font-size:14px;right:376px;color:#fff;">-0.10</div>
<div class="t" style="top:621.15px;font-size:14px;right:232px;color:#fff;">0.00</div>
<div class="t" style="top:621.15px;font-size:14px;right:35px;color:#fff;">-0.43</div>
<svg class="a" style="left:1895px;top:622px;" width="13" height="13" viewBox="0 0 13 13"><path d="M1 1L12 12M12 1L1 12" stroke="#b4b4b4" stroke-width="1.6"/></svg>
<div class="a" style="left:21px;top:665px;width:1893px;height:1px;background:#d0d0d0;"></div>
<div class="a" style="left:206px;top:640px;width:1px;height:25px;background:#d0d0d0;"></div>
<div class="a" style="left:466px;top:640px;width:1px;height:25px;background:#d0d0d0;"></div>
<div class="a" style="left:596px;top:640px;width:1px;height:25px;background:#d0d0d0;"></div>
<div class="a" style="left:697px;top:640px;width:1px;height:25px;background:#d0d0d0;"></div>
<div class="a" style="left:827px;top:640px;width:1px;height:25px;background:#d0d0d0;"></div>
<div class="a" style="left:971px;top:640px;width:1px;height:25px;background:#d0d0d0;"></div>
<div class="a" style="left:1115px;top:640px;width:1px;height:25px;background:#d0d0d0;"></div>
<div class="a" style="left:1259px;top:640px;width:1px;height:25px;background:#d0d0d0;"></div>
<div class="a" style="left:1403px;top:640px;width:1px;height:25px;background:#d0d0d0;"></div>
<div class="a" style="left:1547px;top:640px;width:1px;height:25px;background:#d0d0d0;"></div>
<div class="a" style="left:1691px;top:640px;width:1px;height:25px;background:#d0d0d0;"></div>
<svg class="a" style="left:24px;top:644px;" width="19" height="19" viewBox="0 0 19 19"><defs><linearGradient id="dg16" x1="0" y1="0" x2="1" y2="1"><stop offset="0" stop-color="#fff"/><stop offset="1" stop-color="#d8d8d8"/></linearGradient></defs><path d="M0.5 1.5 Q0.5 0.5 1.5 0.5 H11 L14.5 4 V15.5 Q14.5 16.5 13.5 16.5 H1.5 Q0.5 16.5 0.5 15.5Z" fill="url(#dg16)" stroke="#6b6b6b"/><path d="M11 0.5 V4 H14.5" fill="none" stroke="#6b6b6b"/><circle cx="13.7" cy="14" r="4.2" fill="#2a8de0" stroke="#0a5fb0" stroke-width="0.8"/><circle cx="12.8" cy="12.8" r="1.4" fill="#fff" opacity="0.4"/></svg>
<div class="t" style="top:646.15px;font-size:14px;left:48px;">85022645</div>
<div class="t" style="top:646.15px;font-size:14px;right:1457px;">2019.01.07 17:21:59</div>
<div class="t" style="top:646.15px;font-size:14px;right:1327px;">buy</div>
<div class="t" style="top:646.15px;font-size:14px;right:1226px;">0.02</div>
<div class="t" style="top:646.15px;font-size:14px;right:1096px;">gbpusd</div>
<div class="t" style="top:646.15px;font-size:14px;right:952px;">1.27814</div>
<div class="t" style="top:646.15px;font-size:14px;right:808px;">0.00000</div>
<div class="t" style="top:646.15px;font-size:14px;right:664px;">0.00000</div>
<div class="t" style="top:646.15px;font-size:14px;right:520px;">1.27827</div>
<div class="t" style="top:646.15px;font-size:14px;right:376px;">-0.11</div>
<div class="t" style="top:646.15px;font-size:14px;right:232px;">0.00</div>
<div class="t" style="top:646.15px;font-size:14px;right:35px;">0.23</div>
<svg class="a" style="left:1895px;top:647px;" width="13" height="13" viewBox="0 0 13 13"><path d="M1 1L12 12M12 1L1 12" stroke="#9a9a9a" stroke-width="1.6"/></svg>
<div class="a" style="left:21px;top:666px;width:1892px;height:24px;background:#ebebeb;"></div>
<div class="a" style="left:21px;top:690px;width:1893px;height:1px;background:#d0d0d0;"></div>
<div class="a" style="left:206px;top:665px;width:1px;height:25px;background:#d0d0d0;"></div>
<div class="a" style="left:466px;top:665px;width:1px;height:25px;background:#d0d0d0;"></div>
<div class="a" style="left:596px;top:665px;width:1px;height:25px;background:#d0d0d0;"></div>
<div class="a" style="left:697px;top:665px;width:1px;height:25px;background:#d0d0d0;"></div>
<div class="a" style="left:827px;top:665px;width:1px;height:25px;background:#d0d0d0;"></div>
<div class="a" style="left:971px;top:665px;width:1px;height:25px;background:#d0d0d0;"></div>
<div class="a" style="left:1115px;top:665px;width:1px;height:25px;background:#d0d0d0;"></div>
<div class="a" style="left:1259px;top:665px;width:1px;height:25px;background:#d0d0d0;"></div>
<div class="a" style="left:1403px;top:665px;width:1px;height:25px;background:#d0d0d0;"></div>
<div class="a" style="left:1547px;top:665px;width:1px;height:25px;background:#d0d0d0;"></div>
<div class="a" style="left:1691px;top:665px;width:1px;height:25px;background:#d0d0d0;"></div>
<svg class="a" style="left:24px;top:669px;" width="19" height="19" viewBox="0 0 19 19"><defs><linearGradient id="dg17" x1="0" y1="0" x2="1" y2="1"><stop offset="0" stop-color="#fff"/><stop offset="1" stop-color="#d8d8d8"/></linearGradient></defs><path d="M0.5 1.5 Q0.5 0.5 1.5 0.5 H11 L14.5 4 V15.5 Q14.5 16.5 13.5 16.5 H1.5 Q0.5 16.5 0.5 15.5Z" fill="url(#dg17)" stroke="#6b6b6b"/><path d="M11 0.5 V4 H14.5" fill="none" stroke="#6b6b6b"/><circle cx="13.7" cy="14" r="4.2" fill="#e2451c" stroke="#b02a0a" stroke-width="0.8"/><circle cx="12.8" cy="12.8" r="1.4" fill="#fff" opacity="0.4"/></svg>
<div class="t" style="top:671.15px;font-size:14px;left:48px;">85022648</div>
<div class="t" style="top:671.15px;font-size:14px;right:1457px;">2019.01.07 17:22:21</div>
<div class="t" style="top:671.15px;font-size:14px;right:1327px;">sell</div>
<div class="t" style="top:671.15px;font-size:14px;right:1226px;">0.02</div>
<div class="t" style="top:671.15px;font-size:14px;right:1096px;">eurgbp</div>
<div class="t" style="top:671.15px;font-size:14px;right:952px;">0.89703</div>
<div class="t" style="top:671.15px;font-size:14px;right:808px;">0.00000</div>
<div class="t" style="top:671.15px;font-size:14px;right:664px;">0.00000</div>
<div class="t" style="top:671.15px;font-size:14px;right:520px;">0.89702</div>
<div class="t" style="top:671.15px;font-size:14px;right:376px;">-0.10</div>
<div class="t" style="top:671.15px;font-size:14px;right:232px;">0.00</div>
<div class="t" style="top:671.15px;font-size:14px;right:35px;">0.02</div>
<svg class="a" style="left:1895px;top:672px;" width="13" height="13" viewBox="0 0 13 13"><path d="M1 1L12 12M12 1L1 12" stroke="#9a9a9a" stroke-width="1.6"/></svg>
<div class="a" style="left:21px;top:715px;width:1893px;height:1px;background:#d0d0d0;"></div>
<div class="a" style="left:206px;top:690px;width:1px;height:25px;background:#d0d0d0;"></div>
<div class="a" style="left:466px;top:690px;width:1px;height:25px;background:#d0d0d0;"></div>
<div class="a" style="left:596px;top:690px;width:1px;height:25px;background:#d0d0d0;"></div>
<div class="a" style="left:697px;top:690px;width:1px;height:25px;background:#d0d0d0;"></div>
<div class="a" style="left:827px;top:690px;width:1px;height:25px;background:#d0d0d0;"></div>
<div class="a" style="left:971px;top:690px;width:1px;height:25px;background:#d0d0d0;"></div>
<div class="a" style="left:1115px;top:690px;width:1px;height:25px;background:#d0d0d0;"></div>
<div class="a" style="left:1259px;top:690px;width:1px;height:25px;background:#d0d0d0;"></div>
<div class="a" style="left:1403px;top:690px;width:1px;height:25px;background:#d0d0d0;"></div>
<div class="a" style="left:1547px;top:690px;width:1px;height:25px;background:#d0d0d0;"></div>
<div class="a" style="left:1691px;top:690px;width:1px;height:25px;background:#d0d0d0;"></div>
<svg class="a" style="left:24px;top:694px;" width="19" height="19" viewBox="0 0 19 19"><defs><linearGradient id="dg18" x1="0" y1="0" x2="1" y2="1"><stop offset="0" stop-color="#fff"/><stop offset="1" stop-color="#d8d8d8"/></linearGradient></defs><path d="M0.5 1.5 Q0.5 0.5 1.5 0.5 H11 L14.5 4 V15.5 Q14.5 16.5 13.5 16.5 H1.5 Q0.5 16.5 0.5 15.5Z" fill="url(#dg18)" stroke="#6b6b6b"/><path d="M11 0.5 V4 H14.5" fill="none" stroke="#6b6b6b"/><circle cx="13.7" cy="14" r="4.2" fill="#2a8de0" stroke="#0a5fb0" stroke-width="0.8"/><circle cx="12.8" cy="12.8" r="1.4" fill="#fff" opacity="0.4"/></svg>
<div class="t" style="top:696.15px;font-size:14px;left:48px;">85022649</div>
<div class="t" style="top:696.15px;font-size:14px;right:1457px;">2019.01.07 17:22:22</div>
<div class="t" style="top:696.15px;font-size:14px;right:1327px;">buy</div>
<div class="t" style="top:696.15px;font-size:14px;right:1226px;">0.02</div>
<div class="t" style="top:696.15px;font-size:14px;right:1096px;">gbpchf</div>
<div class="t" style="top:696.15px;font-size:14px;right:952px;">1.25174</div>
<div class="t" style="top:696.15px;font-size:14px;right:808px;">0.00000</div>
<div class="t" style="top:696.15px;font-size:14px;right:664px;">0.00000</div>
<div class="t" style="top:696.15px;font-size:14px;right:520px;">1.25185</div>
<div class="t" style="top:696.15px;font-size:14px;right:376px;">-0.11</div>
<div class="t" style="top:696.15px;font-size:14px;right:232px;">0.00</div>
<div class="t" style="top:696.15px;font-size:14px;right:35px;">0.19</div>
<svg class="a" style="left:1895px;top:697px;" width="13" height="13" viewBox="0 0 13 13"><path d="M1 1L12 12M12 1L1 12" stroke="#9a9a9a" stroke-width="1.6"/></svg>
<div class="a" style="left:21px;top:716px;width:1892px;height:24px;background:#ebebeb;"></div>
<div class="a" style="left:21px;top:740px;width:1893px;height:1px;background:#d0d0d0;"></div>
<div class="a" style="left:206px;top:715px;width:1px;height:25px;background:#d0d0d0;"></div>
<div class="a" style="left:466px;top:715px;width:1px;height:25px;background:#d0d0d0;"></div>
<div class="a" style="left:596px;top:715px;width:1px;height:25px;background:#d0d0d0;"></div>
<div class="a" style="left:697px;top:715px;width:1px;height:25px;background:#d0d0d0;"></div>
<div class="a" style="left:827px;top:715px;width:1px;height:25px;background:#d0d0d0;"></div>
<div class="a" style="left:971px;top:715px;width:1px;height:25px;background:#d0d0d0;"></div>
<div class="a" style="left:1115px;top:715px;width:1px;height:25px;background:#d0d0d0;"></div>
<div class="a" style="left:1259px;top:715px;width:1px;height:25px;background:#d0d0d0;"></div>
<div class="a" style="left:1403px;top:715px;width:1px;height:25px;background:#d0d0d0;"></div>
<div class="a" style="left:1547px;top:715px;width:1px;height:25px;background:#d0d0d0;"></div>
<div class="a" style="left:1691px;top:715px;width:1px;height:25px;background:#d0d0d0;"></div>
<svg class="a" style="left:24px;top:719px;" width="19" height="19" viewBox="0 0 19 19"><defs><linearGradient id="dg19" x1="0" y1="0" x2="1" y2="1"><stop offset="0" stop-color="#fff"/><stop offset="1" stop-color="#d8d8d8"/></linearGradient></defs><path d="M0.5 1.5 Q0.5 0.5 1.5 0.5 H11 L14.5 4 V15.5 Q14.5 16.5 13.5 16.5 H1.5 Q0.5 16.5 0.5 15.5Z" fill="url(#dg19)" stroke="#6b6b6b"/><path d="M11 0.5 V4 H14.5" fill="none" stroke="#6b6b6b"/><circle cx="13.7" cy="14" r="4.2" fill="#e2451c" stroke="#b02a0a" stroke-width="0.8"/><circle cx="12.8" cy="12.8" r="1.4" fill="#fff" opacity="0.4"/></svg>
<div class="t" style="top:721.15px;font-size:14px;left:48px;">85022650</div>
<div class="t" style="top:721.15px;font-size:14px;right:1457px;">2019.01.07 17:22:34</div>
<div class="t" style="top:721.15px;font-size:14px;right:1327px;">sell</div>
<div class="t" style="top:721.15px;font-size:14px;right:1226px;">0.02</div>
<div class="t" style="top:721.15px;font-size:14px;right:1096px;">eurgbp</div>
<div class="t" style="top:721.15px;font-size:14px;right:952px;">0.89697</div>
<div class="t" style="top:721.15px;font-size:14px;right:808px;">0.00000</div>
<div class="t" style="top:721.15px;font-size:14px;right:664px;">0.00000</div>
<div class="t" style="top:721.15px;font-size:14px;right:520px;">0.89702</div>
<div class="t" style="top:721.15px;font-size:14px;right:376px;">-0.10</div>
<div class="t" style="top:721.15px;font-size:14px;right:232px;">0.00</div>
<div class="t" style="top:721.15px;font-size:14px;right:35px;">-0.11</div>
<svg class="a" style="left:1895px;top:722px;" width="13" height="13" viewBox="0 0 13 13"><path d="M1 1L12 12M12 1L1 12" stroke="#9a9a9a" stroke-width="1.6"/></svg>
<div class="a" style="left:21px;top:765px;width:1893px;height:1px;background:#d0d0d0;"></div>
<div class="a" style="left:206px;top:740px;width:1px;height:25px;background:#d0d0d0;"></div>
<div class="a" style="left:466px;top:740px;width:1px;height:25px;background:#d0d0d0;"></div>
<div class="a" style="left:596px;top:740px;width:1px;height:25px;background:#d0d0d0;"></div>
<div class="a" style="left:697px;top:740px;width:1px;height:25px;background:#d0d0d0;"></div>
<div class="a" style="left:827px;top:740px;width:1px;height:25px;background:#d0d0d0;"></div>
<div class="a" style="left:971px;top:740px;width:1px;height:25px;background:#d0d0d0;"></div>
<div class="a" style="left:1115px;top:740px;width:1px;height:25px;background:#d0d0d0;"></div>
<div class="a" style="left:1259px;top:740px;width:1px;height:25px;background:#d0d0d0;"></div>
<div class="a" style="left:1403px;top:740px;width:1px;height:25px;background:#d0d0d0;"></div>
<div class="a" style="left:1547px;top:740px;width:1px;height:25px;background:#d0d0d0;"></div>
<div class="a" style="left:1691px;top:740px;width:1px;height:25px;background:#d0d0d0;"></div>
<svg class="a" style="left:24px;top:744px;" width="19" height="19" viewBox="0 0 19 19"><defs><linearGradient id="dg20" x1="0" y1="0" x2="1" y2="1"><stop offset="0" stop-color="#fff"/><stop offset="1" stop-color="#d8d8d8"/></linearGradient></defs><path d="M0.5 1.5 Q0.5 0.5 1.5 0.5 H11 L14.5 4 V15.5 Q14.5 16.5 13.5 16.5 H1.5 Q0.5 16.5 0.5 15.5Z" fill="url(#dg20)" stroke="#6b6b6b"/><path d="M11 0.5 V4 H14.5" fill="none" stroke="#6b6b6b"/><circle cx="13.7" cy="14" r="4.2" fill="#2a8de0" stroke="#0a5fb0" stroke-width="0.8"/><circle cx="12.8" cy="12.8" r="1.4" fill="#fff" opacity="0.4"/></svg>
<div class="t" style="top:746.15px;font-size:14px;left:48px;">85022651</div>
<div class="t" style="top:746.15px;font-size:14px;right:1457px;">2019.01.07 17:22:35</div>
<div class="t" style="top:746.15px;font-size:14px;right:1327px;">buy</div>
<div class="t" style="top:746.15px;font-size:14px;right:1226px;">0.02</div>
<div class="t" style="top:746.15px;font-size:14px;right:1096px;">gbpusd</div>
<div class="t" style="top:746.15px;font-size:14px;right:952px;">1.27812</div>
<div class="t" style="top:746.15px;font-size:14px;right:808px;">0.00000</div>
<div class="t" style="top:746.15px;font-size:14px;right:664px;">0.00000</div>
<div class="t" style="top:746.15px;font-size:14px;right:520px;">1.27827</div>
<div class="t" style="top:746.15px;font-size:14px;right:376px;">-0.11</div>
<div class="t" style="top:746.15px;font-size:14px;right:232px;">0.00</div>
<div class="t" style="top:746.15px;font-size:14px;right:35px;">0.26</div>
<svg class="a" style="left:1895px;top:747px;" width="13" height="13" viewBox="0 0 13 13"><path d="M1 1L12 12M12 1L1 12" stroke="#9a9a9a" stroke-width="1.6"/></svg>
<div class="a" style="left:21px;top:766px;width:1892px;height:24px;background:#ebebeb;"></div>
<div class="a" style="left:21px;top:790px;width:1893px;height:1px;background:#d0d0d0;"></div>
<div class="a" style="left:206px;top:765px;width:1px;height:25px;background:#d0d0d0;"></div>
<div class="a" style="left:466px;top:765px;width:1px;height:25px;background:#d0d0d0;"></div>
<div class="a" style="left:596px;top:765px;width:1px;height:25px;background:#d0d0d0;"></div>
<div class="a" style="left:697px;top:765px;width:1px;height:25px;background:#d0d0d0;"></div>
<div class="a" style="left:827px;top:765px;width:1px;height:25px;background:#d0d0d0;"></div>
<div class="a" style="left:971px;top:765px;width:1px;height:25px;background:#d0d0d0;"></div>
<div class="a" style="left:1115px;top:765px;width:1px;height:25px;background:#d0d0d0;"></div>
<div class="a" style="left:1259px;top:765px;width:1px;height:25px;background:#d0d0d0;"></div>
<div class="a" style="left:1403px;top:765px;width:1px;height:25px;background:#d0d0d0;"></div>
<div class="a" style="left:1547px;top:765px;width:1px;height:25px;background:#d0d0d0;"></div>
<div class="a" style="left:1691px;top:765px;width:1px;height:25px;background:#d0d0d0;"></div>
<svg class="a" style="left:24px;top:769px;" width="19" height="19" viewBox="0 0 19 19"><defs><linearGradient id="dg21" x1="0" y1="0" x2="1" y2="1"><stop offset="0" stop-color="#fff"/><stop offset="1" stop-color="#d8d8d8"/></linearGradient></defs><path d="M0.5 1.5 Q0.5 0.5 1.5 0.5 H11 L14.5 4 V15.5 Q14.5 16.5 13.5 16.5 H1.5 Q0.5 16.5 0.5 15.5Z" fill="url(#dg21)" stroke="#6b6b6b"/><path d="M11 0.5 V4 H14.5" fill="none" stroke="#6b6b6b"/><circle cx="13.7" cy="14" r="4.2" fill="#e2451c" stroke="#b02a0a" stroke-width="0.8"/><circle cx="12.8" cy="12.8" r="1.4" fill="#fff" opacity="0.4"/></svg>
<div class="t" style="top:771.15px;font-size:14px;left:48px;">85022680</div>
<div class="t" style="top:771.15px;font-size:14px;right:1457px;">2019.01.07 17:23:35</div>
<div class="t" style="top:771.15px;font-size:14px;right:1327px;">sell</div>
<div class="t" style="top:771.15px;font-size:14px;right:1226px;">0.02</div>
<div class="t" style="top:771.15px;font-size:14px;right:1096px;">eurgbp</div>
<div class="t" style="top:771.15px;font-size:14px;right:952px;">0.89706</div>
<div class="t" style="top:771.15px;font-size:14px;right:808px;">0.00000</div>
<div class="t" style="top:771.15px;font-size:14px;right:664px;">0.00000</div>
<div class="t" style="top:771.15px;font-size:14px;right:520px;">0.89702</div>
<div class="t" style="top:771.15px;font-size:14px;right:376px;">-0.10</div>
<div class="t" style="top:771.15px;font-size:14px;right:232px;">0.00</div>
<div class="t" style="top:771.15px;font-size:14px;right:35px;">0.09</div>
<svg class="a" style="left:1895px;top:772px;" width="13" height="13" viewBox="0 0 13 13"><path d="M1 1L12 12M12 1L1 12" stroke="#9a9a9a" stroke-width="1.6"/></svg>
<div class="a" style="left:21px;top:815px;width:1893px;height:1px;background:#d0d0d0;"></div>
<div class="a" style="left:206px;top:790px;width:1px;height:25px;background:#d0d0d0;"></div>
<div class="a" style="left:466px;top:790px;width:1px;height:25px;background:#d0d0d0;"></div>
<div class="a" style="left:596px;top:790px;width:1px;height:25px;background:#d0d0d0;"></div>
<div class="a" style="left:697px;top:790px;width:1px;height:25px;background:#d0d0d0;"></div>
<div class="a" style="left:827px;top:790px;width:1px;height:25px;background:#d0d0d0;"></div>
<div class="a" style="left:971px;top:790px;width:1px;height:25px;background:#d0d0d0;"></div>
<div class="a" style="left:1115px;top:790px;width:1px;height:25px;background:#d0d0d0;"></div>
<div class="a" style="left:1259px;top:790px;width:1px;height:25px;background:#d0d0d0;"></div>
<div class="a" style="left:1403px;top:790px;width:1px;height:25px;background:#d0d0d0;"></div>
<div class="a" style="left:1547px;top:790px;width:1px;height:25px;background:#d0d0d0;"></div>
<div class="a" style="left:1691px;top:790px;width:1px;height:25px;background:#d0d0d0;"></div>
<svg class="a" style="left:24px;top:794px;" width="19" height="19" viewBox="0 0 19 19"><defs><linearGradient id="dg22" x1="0" y1="0" x2="1" y2="1"><stop offset="0" stop-color="#fff"/><stop offset="1" stop-color="#d8d8d8"/></linearGradient></defs><path d="M0.5 1.5 Q0.5 0.5 1.5 0.5 H11 L14.5 4 V15.5 Q14.5 16.5 13.5 16.5 H1.5 Q0.5 16.5 0.5 15.5Z" fill="url(#dg22)" stroke="#6b6b6b"/><path d="M11 0.5 V4 H14.5" fill="none" stroke="#6b6b6b"/><circle cx="13.7" cy="14" r="4.2" fill="#2a8de0" stroke="#0a5fb0" stroke-width="0.8"/><circle cx="12.8" cy="12.8" r="1.4" fill="#fff" opacity="0.4"/></svg>
<div class="t" style="top:796.15px;font-size:14px;left:48px;">85022688</div>
<div class="t" style="top:796.15px;font-size:14px;right:1457px;">2019.01.07 17:23:48</div>
<div class="t" style="top:796.15px;font-size:14px;right:1327px;">buy</div>
<div class="t" style="top:796.15px;font-size:14px;right:1226px;">0.02</div>
<div class="t" style="top:796.15px;font-size:14px;right:1096px;">nzdjpy</div>
<div class="t" style="top:796.15px;font-size:14px;right:952px;">73.262</div>
<div class="t" style="top:796.15px;font-size:14px;right:808px;">0.000</div>
<div class="t" style="top:796.15px;font-size:14px;right:664px;">0.000</div>
<div class="t" style="top:796.15px;font-size:14px;right:520px;">73.266</div>
<div class="t" style="top:796.15px;font-size:14px;right:376px;">-0.06</div>
<div class="t" style="top:796.15px;font-size:14px;right:232px;">0.00</div>
<div class="t" style="top:796.15px;font-size:14px;right:35px;">0.07</div>
<svg class="a" style="left:1895px;top:797px;" width="13" height="13" viewBox="0 0 13 13"><path d="M1 1L12 12M12 1L1 12" stroke="#9a9a9a" stroke-width="1.6"/></svg>
<div class="a" style="left:21px;top:816px;width:1892px;height:24px;background:#ebebeb;"></div>
<div class="a" style="left:21px;top:840px;width:1893px;height:1px;background:#d0d0d0;"></div>
<div class="a" style="left:206px;top:815px;width:1px;height:25px;background:#d0d0d0;"></div>
<div class="a" style="left:466px;top:815px;width:1px;height:25px;background:#d0d0d0;"></div>
<div class="a" style="left:596px;top:815px;width:1px;height:25px;background:#d0d0d0;"></div>
<div class="a" style="left:697px;top:815px;width:1px;height:25px;background:#d0d0d0;"></div>
<div class="a" style="left:827px;top:815px;width:1px;height:25px;background:#d0d0d0;"></div>
<div class="a" style="left:971px;top:815px;width:1px;height:25px;background:#d0d0d0;"></div>
<div class="a" style="left:1115px;top:815px;width:1px;height:25px;background:#d0d0d0;"></div>
<div class="a" style="left:1259px;top:815px;width:1px;height:25px;background:#d0d0d0;"></div>
<div class="a" style="left:1403px;top:815px;width:1px;height:25px;background:#d0d0d0;"></div>
<div class="a" style="left:1547px;top:815px;width:1px;height:25px;background:#d0d0d0;"></div>
<div class="a" style="left:1691px;top:815px;width:1px;height:25px;background:#d0d0d0;"></div>
<svg class="a" style="left:24px;top:819px;" width="19" height="19" viewBox="0 0 19 19"><defs><linearGradient id="dg23" x1="0" y1="0" x2="1" y2="1"><stop offset="0" stop-color="#fff"/><stop offset="1" stop-color="#d8d8d8"/></linearGradient></defs><path d="M0.5 1.5 Q0.5 0.5 1.5 0.5 H11 L14.5 4 V15.5 Q14.5 16.5 13.5 16.5 H1.5 Q0.5 16.5 0.5 15.5Z" fill="url(#dg23)" stroke="#6b6b6b"/><path d="M11 0.5 V4 H14.5" fill="none" stroke="#6b6b6b"/><circle cx="13.7" cy="14" r="4.2" fill="#e2451c" stroke="#b02a0a" stroke-width="0.8"/><circle cx="12.8" cy="12.8" r="1.4" fill="#fff" opacity="0.4"/></svg>
<div class="t" style="top:821.15px;font-size:14px;left:48px;">85022689</div>
<div class="t" style="top:821.15px;font-size:14px;right:1457px;">2019.01.07 17:23:48</div>
<div class="t" style="top:821.15px;font-size:14px;right:1327px;">sell</div>
<div class="t" style="top:821.15px;font-size:14px;right:1226px;">0.03</div>
<div class="t" style="top:821.15px;font-size:14px;right:1096px;">usdcad</div>
<div class="t" style="top:821.15px;font-size:14px;right:952px;">1.33213</div>
<div class="t" style="top:821.15px;font-size:14px;right:808px;">0.00000</div>
<div class="t" style="top:821.15px;font-size:14px;right:664px;">0.00000</div>
<div class="t" style="top:821.15px;font-size:14px;right:520px;">1.33224</div>
<div class="t" style="top:821.15px;font-size:14px;right:376px;">-0.13</div>
<div class="t" style="top:821.15px;font-size:14px;right:232px;">0.00</div>
<div class="t" style="top:821.15px;font-size:14px;right:35px;">-0.22</div>
<svg class="a" style="left:1895px;top:822px;" width="13" height="13" viewBox="0 0 13 13"><path d="M1 1L12 12M12 1L1 12" stroke="#9a9a9a" stroke-width="1.6"/></svg>
<div class="a" style="left:21px;top:865px;width:1893px;height:1px;background:#d0d0d0;"></div>
<div class="a" style="left:206px;top:840px;width:1px;height:25px;background:#d0d0d0;"></div>
<div class="a" style="left:466px;top:840px;width:1px;height:25px;background:#d0d0d0;"></div>
<div class="a" style="left:596px;top:840px;width:1px;height:25px;background:#d0d0d0;"></div>
<div class="a" style="left:697px;top:840px;width:1px;height:25px;background:#d0d0d0;"></div>
<div class="a" style="left:827px;top:840px;width:1px;height:25px;background:#d0d0d0;"></div>
<div class="a" style="left:971px;top:840px;width:1px;height:25px;background:#d0d0d0;"></div>
<div class="a" style="left:1115px;top:840px;width:1px;height:25px;background:#d0d0d0;"></div>
<div class="a" style="left:1259px;top:840px;width:1px;height:25px;background:#d0d0d0;"></div>
<div class="a" style="left:1403px;top:840px;width:1px;height:25px;background:#d0d0d0;"></div>
<div class="a" style="left:1547px;top:840px;width:1px;height:25px;background:#d0d0d0;"></div>
<div class="a" style="left:1691px;top:840px;width:1px;height:25px;background:#d0d0d0;"></div>
<svg class="a" style="left:24px;top:844px;" width="19" height="19" viewBox="0 0 19 19"><defs><linearGradient id="dg24" x1="0" y1="0" x2="1" y2="1"><stop offset="0" stop-color="#fff"/><stop offset="1" stop-color="#d8d8d8"/></linearGradient></defs><path d="M0.5 1.5 Q0.5 0.5 1.5 0.5 H11 L14.5 4 V15.5 Q14.5 16.5 13.5 16.5 H1.5 Q0.5 16.5 0.5 15.5Z" fill="url(#dg24)" stroke="#6b6b6b"/><path d="M11 0.5 V4 H14.5" fill="none" stroke="#6b6b6b"/><circle cx="13.7" cy="14" r="4.2" fill="#2a8de0" stroke="#0a5fb0" stroke-width="0.8"/><circle cx="12.8" cy="12.8" r="1.4" fill="#fff" opacity="0.4"/></svg>
<div class="t" style="top:846.15px;font-size:14px;left:48px;">85022703</div>
<div class="t" style="top:846.15px;font-size:14px;right:1457px;">2019.01.07 17:23:58</div>
<div class="t" style="top:846.15px;font-size:14px;right:1327px;">buy</div>
<div class="t" style="top:846.15px;font-size:14px;right:1226px;">0.02</div>
<div class="t" style="top:846.15px;font-size:14px;right:1096px;">nzdusd</div>
<div class="t" style="top:846.15px;font-size:14px;right:952px;">0.67570</div>
<div class="t" style="top:846.15px;font-size:14px;right:808px;">0.00000</div>
<div class="t" style="top:846.15px;font-size:14px;right:664px;">0.00000</div>
<div class="t" style="top:846.15px;font-size:14px;right:520px;">0.67562</div>
<div class="t" style="top:846.15px;font-size:14px;right:376px;">-0.06</div>
<div class="t" style="top:846.15px;font-size:14px;right:232px;">0.00</div>
<div class="t" style="top:846.15px;font-size:14px;right:35px;">-0.14</div>
<svg class="a" style="left:1895px;top:847px;" width="13" height="13" viewBox="0 0 13 13"><path d="M1 1L12 12M12 1L1 12" stroke="#9a9a9a" stroke-width="1.6"/></svg>
<div class="a" style="left:21px;top:866px;width:1892px;height:24px;background:#ebebeb;"></div>
<div class="a" style="left:21px;top:890px;width:1893px;height:1px;background:#d0d0d0;"></div>
<div class="a" style="left:206px;top:865px;width:1px;height:25px;background:#d0d0d0;"></div>
<div class="a" style="left:466px;top:865px;width:1px;height:25px;background:#d0d0d0;"></div>
<div class="a" style="left:596px;top:865px;width:1px;height:25px;background:#d0d0d0;"></div>
<div class="a" style="left:697px;top:865px;width:1px;height:25px;background:#d0d0d0;"></div>
<div class="a" style="left:827px;top:865px;width:1px;height:25px;background:#d0d0d0;"></div>
<div class="a" style="left:971px;top:865px;width:1px;height:25px;background:#d0d0d0;"></div>
<div class="a" style="left:1115px;top:865px;width:1px;height:25px;background:#d0d0d0;"></div>
<div class="a" style="left:1259px;top:865px;width:1px;height:25px;background:#d0d0d0;"></div>
<div class="a" style="left:1403px;top:865px;width:1px;height:25px;background:#d0d0d0;"></div>
<div class="a" style="left:1547px;top:865px;width:1px;height:25px;background:#d0d0d0;"></div>
<div class="a" style="left:1691px;top:865px;width:1px;height:25px;background:#d0d0d0;"></div>
<svg class="a" style="left:24px;top:869px;" width="19" height="19" viewBox="0 0 19 19"><defs><linearGradient id="dg25" x1="0" y1="0" x2="1" y2="1"><stop offset="0" stop-color="#fff"/><stop offset="1" stop-color="#d8d8d8"/></linearGradient></defs><path d="M0.5 1.5 Q0.5 0.5 1.5 0.5 H11 L14.5 4 V15.5 Q14.5 16.5 13.5 16.5 H1.5 Q0.5 16.5 0.5 15.5Z" fill="url(#dg25)" stroke="#6b6b6b"/><path d="M11 0.5 V4 H14.5" fill="none" stroke="#6b6b6b"/><circle cx="13.7" cy="14" r="4.2" fill="#e2451c" stroke="#b02a0a" stroke-width="0.8"/><circle cx="12.8" cy="12.8" r="1.4" fill="#fff" opacity="0.4"/></svg>
<div class="t" style="top:871.15px;font-size:14px;left:48px;">85022704</div>
<div class="t" style="top:871.15px;font-size:14px;right:1457px;">2019.01.07 17:23:58</div>
<div class="t" style="top:871.15px;font-size:14px;right:1327px;">sell</div>
<div class="t" style="top:871.15px;font-size:14px;right:1226px;">0.02</div>
<div class="t" style="top:871.15px;font-size:14px;right:1096px;">usdchf</div>
<div class="t" style="top:871.15px;font-size:14px;right:952px;">0.97931</div>
<div class="t" style="top:871.15px;font-size:14px;right:808px;">0.00000</div>
<div class="t" style="top:871.15px;font-size:14px;right:664px;">0.00000</div>
<div class="t" style="top:871.15px;font-size:14px;right:520px;">0.97940</div>
<div class="t" style="top:871.15px;font-size:14px;right:376px;">-0.09</div>
<div class="t" style="top:871.15px;font-size:14px;right:232px;">0.00</div>
<div class="t" style="top:871.15px;font-size:14px;right:35px;">-0.16</div>
<svg class="a" style="left:1895px;top:872px;" width="13" height="13" viewBox="0 0 13 13"><path d="M1 1L12 12M12 1L1 12" stroke="#9a9a9a" stroke-width="1.6"/></svg>
<div class="a" style="left:21px;top:890px;width:1892px;height:25px;background:#c8c8c8;"></div>
<svg class="a" style="left:24px;top:893px;" width="17" height="19" viewBox="0 0 17 19"><rect x="0.5" y="0.5" width="15" height="17" rx="1.5" fill="#fbfbfb" stroke="#777"/><path d="M6 4.5h4v4h2.5L8 13 3.5 8.5H6z" fill="#e0401a" stroke="#a02000" stroke-width="0.6"/></svg>
<div class="t" style="top:895.30px;font-size:15px;left:48px;font-weight:bold;">Solde : 5 017.20 EUR&nbsp; Fonds : 5 016.47&nbsp; Marge : 1 935.79&nbsp; Marge disponible : 3 080.68&nbsp; Marge limite : 259.14%</div>
<div class="t" style="top:895.30px;font-size:15px;right:36px;font-weight:bold;">-0.73</div>
<div class="a" style="left:21px;top:968px;width:1893px;height:1px;background:#000;"></div>
<div class="a" style="left:23px;top:968px;width:88px;height:25px;background:#fff;"></div>
<div class="a" style="left:23px;top:968px;width:1px;height:25px;background:#000;"></div>
<div class="a" style="left:110px;top:968px;width:1px;height:25px;background:#000;"></div>
<div class="a" style="left:23px;top:992px;width:88px;height:1px;background:#000;"></div>
<div class="a" style="left:21px;top:995px;width:1895px;height:1px;background:#fbfbfb;"></div>
<div class="a" style="left:1915px;top:213px;width:1px;height:783px;background:#fbfbfb;"></div>
<div class="t" style="top:973.37px;font-size:14.92px;left:36.5px;">Trading</div>
<div class="a" style="left:37px;top:987px;width:8px;height:1px;background:#000;"></div>
<div class="t" style="top:973.24px;font-size:15.07px;left:125px;color:#6d6d6d;">Exposition</div>
<div class="a" style="left:205px;top:973px;width:1px;height:19px;background:#6d6d6d;"></div>
<div class="t" style="top:972.92px;font-size:15.45px;left:218.3px;color:#6d6d6d;">Historique du compte</div>
<div class="a" style="left:375px;top:973px;width:1px;height:19px;background:#6d6d6d;"></div>
<div class="t" style="top:973.23px;font-size:15.09px;left:388.3px;color:#6d6d6d;">Nouvelles</div>
<div class="a" style="left:470px;top:973px;width:1px;height:19px;background:#6d6d6d;"></div>
<div class="t" style="top:973.40px;font-size:14.89px;left:482px;color:#6d6d6d;">Alertes</div>
<div class="a" style="left:540px;top:973px;width:1px;height:19px;background:#6d6d6d;"></div>
<div class="t" style="top:973.60px;font-size:14.65px;left:553.5px;color:#6d6d6d;">Messagerie</div>
<div class="a" style="left:650px;top:973px;width:1px;height:19px;background:#6d6d6d;"></div>
<div class="t" style="top:973.27px;font-size:15.04px;left:663.3px;color:#6d6d6d;">Marché</div>
<div class="a" style="left:748px;top:973px;width:1px;height:19px;background:#6d6d6d;"></div>
<div class="t" style="top:973.65px;font-size:14.59px;left:761px;color:#6d6d6d;">Signaux</div>
<div class="a" style="left:825px;top:973px;width:1px;height:19px;background:#6d6d6d;"></div>
<div class="t" style="top:973.23px;font-size:15.08px;left:838px;color:#6d6d6d;">Articles</div>
<div class="a" style="left:899px;top:973px;width:1px;height:19px;background:#6d6d6d;"></div>
<div class="t" style="top:972.66px;font-size:15.76px;left:912px;color:#6d6d6d;">Bibliotheque</div>
<div class="a" style="left:1009px;top:973px;width:1px;height:19px;background:#6d6d6d;"></div>
<div class="t" style="top:973.74px;font-size:14.48px;left:1022.5px;color:#6d6d6d;">Experts</div>
<div class="a" style="left:1082px;top:973px;width:1px;height:19px;background:#6d6d6d;"></div>
<div class="t" style="top:973.74px;font-size:14.48px;left:1094.8px;color:#6d6d6d;">Journal</div>
<div class="a" style="left:1154px;top:973px;width:1px;height:19px;background:#6d6d6d;"></div>
<div class="t" style="top:980.27px;font-size:11.5px;left:631.5px;color:#e81123;font-weight:bold;">6</div>
<div class="t" style="top:980.27px;font-size:11.5px;left:716px;color:#e81123;font-weight:bold;">114</div>
<div class="a" style="left:0px;top:1000px;width:1920px;height:1px;background:#a0a0a0;"></div>
<div class="a" style="left:0px;top:1001px;width:1920px;height:29px;background:#f0f0f0;"></div>
<div class="t" style="top:1010.47px;font-size:14.8px;left:2.5px;">Pour plus d'informations, appuyer F1</div>
<div class="a" style="left:1047px;top:1004px;width:1px;height:25px;background:#c4c4c4;"></div>
<div class="a" style="left:1196px;top:1004px;width:1px;height:25px;background:#c4c4c4;"></div>
<div class="a" style="left:1328px;top:1004px;width:1px;height:25px;background:#c4c4c4;"></div>
<div class="a" style="left:1417px;top:1004px;width:1px;height:25px;background:#c4c4c4;"></div>
<div class="a" style="left:1506px;top:1004px;width:1px;height:25px;background:#c4c4c4;"></div>
<div class="a" style="left:1591px;top:1004px;width:1px;height:25px;background:#c4c4c4;"></div>
<div class="a" style="left:1678px;top:1004px;width:1px;height:25px;background:#c4c4c4;"></div>
<div class="a" style="left:1762px;top:1004px;width:1px;height:25px;background:#c4c4c4;"></div>
<div class="t" style="top:1010.30px;font-size:15px;left:1053px;">Spread_trading-2</div>
<svg class="a" style="left:1768px;top:1008px;" width="31" height="16" viewBox="0 0 31 16"><rect x="0" y="0" width="2" height="7" fill="#5b8a12"/><rect x="0" y="10" width="2" height="6" fill="#b01a10"/><rect x="3" y="0" width="2" height="7" fill="#5b8a12"/><rect x="3" y="9" width="2" height="7" fill="#b01a10"/><rect x="6" y="0" width="2" height="7" fill="#5b8a12"/><rect x="6" y="8" width="2" height="8" fill="#b01a10"/><rect x="9" y="0" width="2" height="7" fill="#5b8a12"/><rect x="9" y="7" width="2" height="9" fill="#b01a10"/><rect x="12" y="0" width="2" height="7" fill="#5b8a12"/><rect x="12" y="6" width="2" height="10" fill="#b01a10"/><rect x="15" y="0" width="2" height="7" fill="#5b8a12"/><rect x="15" y="5" width="2" height="11" fill="#b01a10"/><rect x="18" y="0" width="2" height="7" fill="#5b8a12"/><rect x="18" y="4" width="2" height="12" fill="#b01a10"/><rect x="21" y="0" width="2" height="7" fill="#5b8a12"/><rect x="21" y="3" width="2" height="13" fill="#b01a10"/><rect x="24" y="0" width="2" height="7" fill="#5b8a12"/><rect x="24" y="2" width="2" height="14" fill="#b01a10"/><rect x="27" y="0" width="2" height="7" fill="#5b8a12"/><rect x="27" y="1" width="2" height="15" fill="#b01a10"/></svg>
<div class="t" style="top:1010.13px;font-size:15.2px;left:1804px;">920/15 kb</div>
<div class="a" style="left:0px;top:1030px;width:1920px;height:50px;background:#0b1019;"></div>
<div class="a" style="left:60px;top:1030px;width:430px;height:50px;background:#f0f0f0;"></div>
<svg class="a" style="left:20px;top:1044px;" width="21" height="21" viewBox="0 0 21 21"><path d="M0 2.8L8.5 1.6V9.8H0Z M9.6 1.45L20 0V9.8H9.6Z M0 10.9H8.5V19.1L0 17.9Z M9.6 10.9H20V20.4L9.6 19Z" fill="#fff"/></svg>
<svg class="a" style="left:70px;top:1040px;" width="30" height="30" viewBox="0 0 30 30"><circle cx="15" cy="15" r="12.5" fill="none" stroke="#000" stroke-width="3.2"/></svg>
<div class="t" style="top:1047.86px;font-size:17.3px;left:110px;color:#333;">Taper ici pour rechercher</div>
<svg class="a" style="left:455px;top:1044px;" width="18" height="22" viewBox="0 0 18 22"><rect x="5" y="1" width="7" height="13" rx="3.5" fill="none" stroke="#222" stroke-width="1.8"/><path d="M2 9Q2 17 8.5 17Q15 17 15 9M8.5 17V21M5 21H12" fill="none" stroke="#222" stroke-width="1.6"/></svg>
<svg class="a" style="left:508px;top:1044px;" width="24" height="22" viewBox="0 0 24 22"><rect x="2" y="5" width="12" height="11" fill="none" stroke="#fff" stroke-width="1.4"/><path d="M2 2H14M2 19H14M19 1V21" stroke="#fff" stroke-width="1.4"/><rect x="17.5" y="8" width="3" height="3" fill="#fff"/></svg>
<svg class="a" style="left:569px;top:1042px;" width="29" height="24" viewBox="0 0 29 24"><path d="M0 3Q0 1 2 1H9L11 3H27Q29 3 29 5V22Q29 24 27 24H2Q0 24 0 22Z" fill="#f6d36a"/><rect x="0" y="6" width="29" height="18" rx="1.5" fill="#fbe08c"/><path d="M7 24V15H22V24H19V18H10V24Z" fill="#3b9de0"/></svg>
<div class="a" style="left:559px;top:1077px;width:51px;height:3px;background:#76b9ed;"></div>
<svg class="a" style="left:631px;top:1039px;" width="30" height="31" viewBox="0 0 30 31"><defs><linearGradient id="ffg" x1="0" y1="0.6" x2="1" y2="0.3"><stop offset="0" stop-color="#d7137e"/><stop offset="0.25" stop-color="#ff3340"/><stop offset="0.55" stop-color="#ff7a1a"/><stop offset="0.75" stop-color="#ffc21a"/><stop offset="1" stop-color="#ffe83a"/></linearGradient>
<radialGradient id="ffb" cx="0.55" cy="0.35" r="0.7"><stop offset="0" stop-color="#0aa8ff"/><stop offset="0.6" stop-color="#1a6ee0"/><stop offset="1" stop-color="#3a2aa0"/></radialGradient></defs>
<path d="M3 6L5.5 9Q2 13 2 17Q2 29 15 29Q28 29 28 16Q28 8 21 3L20 6Q16 2.5 11 4Z" fill="url(#ffg)"/>
<circle cx="15.5" cy="15" r="8.3" fill="url(#ffb)"/>
<path d="M19 1.5Q23 3 25.5 7Q28 11 27 17Q26 12 22 10Q19 7.5 19 1.5Z" fill="#ffe23a"/>
<path d="M7 7Q11 5 13 9Q11 10 10.5 12Q9 14 12.5 15.5Q16 16.5 16.5 18.5Q13 19.5 10 18Q6 15 7 7Z" fill="#ff8a1a"/>
<path d="M21 12Q24 16 21.5 20Q19 23 15 22Q19 20 21 12Z" fill="#ffb01a"/></svg>
<svg class="a" style="left:692px;top:1039px;" width="31" height="31" viewBox="0 0 31 31"><defs><radialGradient id="rg" cx="0.4" cy="0.3" r="0.75"><stop offset="0" stop-color="#9fd3ff"/><stop offset="0.5" stop-color="#2f7fe0"/><stop offset="1" stop-color="#0b3f9e"/></radialGradient></defs>
<circle cx="15.5" cy="15.5" r="14" fill="url(#rg)"/><text x="15.5" y="22" text-anchor="middle" font-family="Liberation Serif" font-size="19" fill="#fff">R</text></svg>
<div class="a" style="left:683px;top:1077px;width:51px;height:3px;background:#76b9ed;"></div>
<svg class="a" style="left:753px;top:1042px;" width="34" height="26" viewBox="0 0 34 26"><ellipse cx="16" cy="11" rx="14.5" ry="8" fill="none" stroke="#9aa0a8" stroke-width="4"/><text x="20" y="25" text-anchor="middle" font-family="Liberation Sans" font-weight="bold" font-size="21" fill="#1f65b7">R</text></svg>
<div class="a" style="left:745px;top:1077px;width:51px;height:3px;background:#76b9ed;"></div>
<div class="a" style="left:802px;top:1030px;width:61px;height:50px;background:#393d46;"></div>
<svg class="a" style="left:817px;top:1040px" width="30" height="30" viewBox="0 0 30 30"><defs><linearGradient id="OBG2" x1="0" y1="0" x2="0" y2="1"><stop offset="0" stop-color="#8a8a8a"/><stop offset="0.35" stop-color="#333"/><stop offset="1" stop-color="#111"/></linearGradient></defs>
<rect x="0" y="0" width="30" height="30" rx="3" fill="url(#OBG2)"/>
<path d="M7 2.5L10.5 6Q15 4.8 19.5 6L23 2.5Q26 8 25.5 15Q25 24 19 26L18 28.5L16.5 26.5H13.5L12 28.5L11 26Q5 24 4.5 15Q4 8 7 2.5Z" fill="#74b6e8"/>
<path d="M7 3L10.5 6.5Q15 5 19.5 6.5L23 3Q24.5 8 24 11L15.5 13.5L15 14.5L14.5 13.5L6 11Q5.5 8 7 3Z" fill="#1a7cc8"/>
<path d="M6.5 11Q8 8.5 12 10.5Q11.5 13 9 12.8Q7 12.5 6.5 11Z" fill="#fff"/><path d="M23.5 11Q22 8.5 18 10.5Q18.5 13 21 12.8Q23 12.5 23.5 11Z" fill="#fff"/>
<circle cx="9.8" cy="11.2" r="1.3" fill="#222"/><circle cx="20.2" cy="11.2" r="1.3" fill="#222"/>
<path d="M5.5 16Q6.5 21 9 22V15Z M24.5 16Q23.5 21 21 22V15Z" fill="#2a88d0"/>
<path d="M11 18H19M11.5 20H18.5M11 22H19" stroke="#4a9ad8" stroke-width="0.7" stroke-dasharray="1.5 0.6"/></svg>
<div class="a" style="left:802px;top:1077px;width:61px;height:3px;background:#76b9ed;"></div>
<svg class="a" style="left:1602px;top:1044px;" width="20" height="21" viewBox="0 0 20 21"><circle cx="13" cy="5" r="3.3" fill="none" stroke="#fff" stroke-width="1.3"/><path d="M7 14Q8 9 13 9Q18 9 19 14" fill="none" stroke="#fff" stroke-width="1.3"/><circle cx="6" cy="11" r="3.3" fill="none" stroke="#fff" stroke-width="1.3"/><path d="M0.8 20Q1.5 15 6 15Q10.5 15 11.2 20" fill="none" stroke="#fff" stroke-width="1.3"/></svg>
<svg class="a" style="left:1648px;top:1049px;" width="18" height="11" viewBox="0 0 18 11"><path d="M1 10L9 2L17 10" fill="none" stroke="#fff" stroke-width="1.4"/></svg>
<svg class="a" style="left:1676px;top:1047px;" width="22" height="15" viewBox="0 0 22 15"><rect x="3.5" y="4.5" width="16" height="9" fill="none" stroke="#fff" stroke-width="1.3"/><rect x="5" y="6" width="13" height="6" fill="#fff"/><rect x="19.5" y="7" width="2" height="4" fill="#fff"/><path d="M1 3V6M4 3V6M0 6H5V8Q5 10 2.5 10Q0 10 0 8Z" stroke="#fff" fill="none" stroke-width="1"/></svg>
<svg class="a" style="left:1708px;top:1047px;" width="20" height="16" viewBox="0 0 20 16"><path d="M1 15Q2 3 16 1M4 15Q5 6 16 4.5M7.5 15Q8 9 16 8" fill="none" stroke="#fff" stroke-width="1.2"/><circle cx="14.5" cy="13.5" r="1.8" fill="#fff"/></svg>
<svg class="a" style="left:1736px;top:1046px;" width="22" height="19" viewBox="0 0 22 19"><path d="M1 6.5H5L10 1.5V17.5L5 12.5H1Z" fill="none" stroke="#fff" stroke-width="1.3"/><path d="M13 7Q15 9.5 13 12" fill="none" stroke="#fff" stroke-width="1.2"/><path d="M16 4Q19.5 9.5 16 15" fill="none" stroke="#aaa" stroke-width="1.1"/><path d="M19 1.5Q24 9.5 19 17.5" fill="none" stroke="#777" stroke-width="1.1"/></svg>
<div class="t" style="top:1037.15px;font-size:14px;left:1807px;color:#fff;width:0;text-align:center;display:flex;justify-content:center;">16:25</div>
<div class="t" style="top:1059.30px;font-size:15px;left:1807px;color:#fff;width:0;display:flex;justify-content:center;">07/01/2019</div>
<svg class="a" style="left:1868px;top:1044px;" width="22" height="22" viewBox="0 0 22 22"><path d="M1 1H20V18H13L10.5 21L8 18H1Z" fill="none" stroke="#fff" stroke-width="1.4"/></svg>
<div class="a" style="left:1914px;top:1030px;width:1px;height:50px;background:#555;"></div>
</body></html>
